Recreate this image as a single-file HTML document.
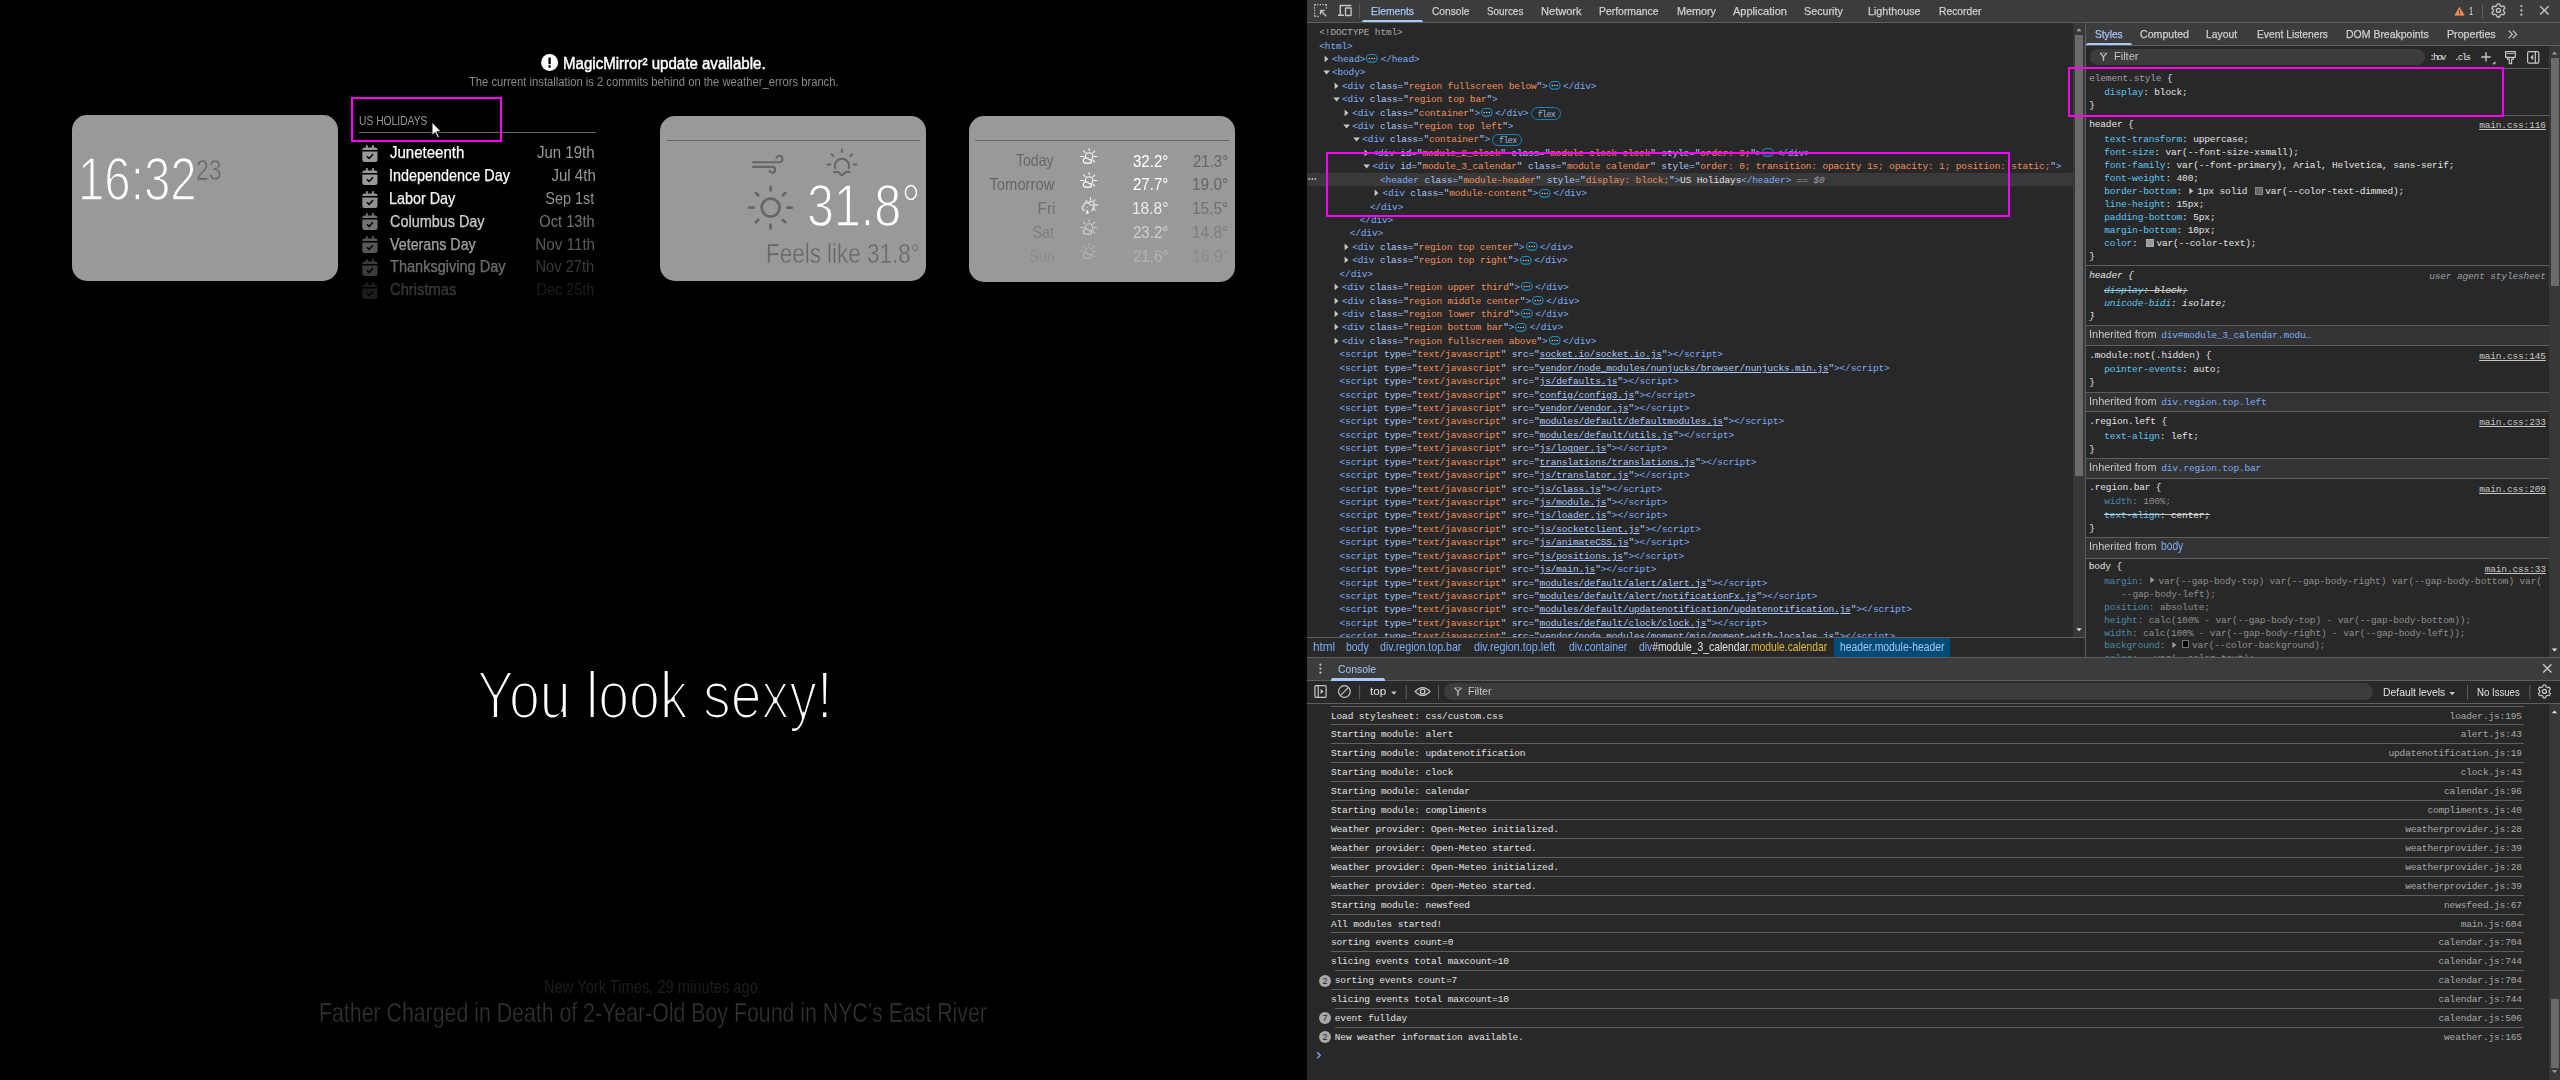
<!DOCTYPE html>
<html><head><meta charset="utf-8"><style>
html,body{margin:0;padding:0;}
body{width:2560px;height:1080px;overflow:hidden;position:relative;background:#000;font-family:"Liberation Sans",sans-serif;}
.t{position:absolute;white-space:pre;line-height:0;}
.r{position:absolute;}
svg{position:absolute;overflow:visible;}
</style></head><body>
<svg style="left:0;top:0" width="0" height="0"><filter id="thin" x="-5%" y="-20%" width="110%" height="140%"><feMorphology operator="erode" radius="1"/></filter></svg>
<svg style="left:541px;top:54px" width="18" height="18" viewBox="0 0 18 18"><circle cx="8.6" cy="8.4" r="8.5" fill="#fff"/><rect x="7.4" y="3.6" width="2.4" height="6.6" rx="0.6" fill="#000"/><rect x="7.4" y="11.3" width="2.4" height="2.4" rx="0.3" fill="#000"/></svg>
<div class="t" id="mm_upd" style="top:63.91px;font-size:15.84px;color:#fff;left:562.50px;transform:scaleX(0.9518);transform-origin:0 0;-webkit-text-stroke:0.45px #fff;">MagicMirror² update available.</div>
<div class="t" id="mm_upd2" style="top:82.17px;font-size:12.50px;color:#8a8a8a;left:469.00px;transform:scaleX(0.8986);transform-origin:0 0;">The current installation is 2 commits behind on the weather_errors branch.</div>
<div class="r" style="left:72.00px;top:115.00px;width:266.00px;height:166.00px;background:#999;border-radius:15px;"></div>
<div class="t" id="mm_clock" style="top:178.84px;font-size:61.05px;color:#fff;left:78.00px;transform:scaleX(0.7764);transform-origin:0 0;-webkit-text-stroke:1.6px #999;">16:32</div>
<div class="t" id="mm_sec" style="top:169.92px;font-size:29.07px;color:#666;left:196.00px;transform:scaleX(0.7924);transform-origin:0 0;-webkit-text-stroke:0.6px #999;">23</div>
<div class="t" id="cal_h" style="top:120.52px;font-size:12.94px;color:#999;left:359.00px;transform:scaleX(0.7951);transform-origin:0 0;">US HOLIDAYS</div>
<div class="r" style="left:359.00px;top:132.00px;width:237.00px;height:1.00px;background:#666;"></div>
<svg style="left:362px;top:144.85px;opacity:1.000" width="16" height="17" viewBox="0 0 16 17"><rect x="0.3" y="2.5" width="15.2" height="14.5" rx="2.2" fill="#999"/><rect x="3.9" y="0" width="1.9" height="4" rx="0.7" fill="#999"/><rect x="10" y="0" width="1.9" height="4" rx="0.7" fill="#999"/><rect x="0" y="5.0" width="16" height="1.5" fill="#000"/><path d="M4.9 11.3 L7.1 13.4 L11 9.3" stroke="#000" stroke-width="1.5" fill="none"/></svg>
<div class="t" id="cal_t0" style="top:153.21px;font-size:16.57px;color:rgba(255,255,255,1.000);left:389.70px;transform:scaleX(0.9072);transform-origin:0 0;-webkit-text-stroke:0.25px rgba(255,255,255,1.000);">Juneteenth</div>
<div class="t" id="cal_d0" style="top:153.21px;font-size:16.57px;color:rgba(153,153,153,1.000);right:1965.50px;transform:scaleX(0.9075);transform-origin:100% 0;">Jun 19th</div>
<svg style="left:362px;top:167.69px;opacity:1.000" width="16" height="17" viewBox="0 0 16 17"><rect x="0.3" y="2.5" width="15.2" height="14.5" rx="2.2" fill="#999"/><rect x="3.9" y="0" width="1.9" height="4" rx="0.7" fill="#999"/><rect x="10" y="0" width="1.9" height="4" rx="0.7" fill="#999"/><rect x="0" y="5.0" width="16" height="1.5" fill="#000"/><path d="M4.9 11.3 L7.1 13.4 L11 9.3" stroke="#000" stroke-width="1.5" fill="none"/></svg>
<div class="t" id="cal_t1" style="top:176.05px;font-size:16.57px;color:rgba(255,255,255,1.000);left:388.70px;transform:scaleX(0.8694);transform-origin:0 0;-webkit-text-stroke:0.25px rgba(255,255,255,1.000);">Independence Day</div>
<div class="t" id="cal_d1" style="top:176.05px;font-size:16.57px;color:rgba(153,153,153,1.000);right:1964.50px;transform:scaleX(0.9095);transform-origin:100% 0;">Jul 4th</div>
<svg style="left:362px;top:190.53px;opacity:0.952" width="16" height="17" viewBox="0 0 16 17"><rect x="0.3" y="2.5" width="15.2" height="14.5" rx="2.2" fill="#999"/><rect x="3.9" y="0" width="1.9" height="4" rx="0.7" fill="#999"/><rect x="10" y="0" width="1.9" height="4" rx="0.7" fill="#999"/><rect x="0" y="5.0" width="16" height="1.5" fill="#000"/><path d="M4.9 11.3 L7.1 13.4 L11 9.3" stroke="#000" stroke-width="1.5" fill="none"/></svg>
<div class="t" id="cal_t2" style="top:198.89px;font-size:16.57px;color:rgba(255,255,255,0.952);left:388.70px;transform:scaleX(0.8673);transform-origin:0 0;-webkit-text-stroke:0.25px rgba(255,255,255,0.952);">Labor Day</div>
<div class="t" id="cal_d2" style="top:198.89px;font-size:16.57px;color:rgba(153,153,153,0.952);right:1965.50px;transform:scaleX(0.8693);transform-origin:100% 0;">Sep 1st</div>
<svg style="left:362px;top:213.37px;opacity:0.762" width="16" height="17" viewBox="0 0 16 17"><rect x="0.3" y="2.5" width="15.2" height="14.5" rx="2.2" fill="#999"/><rect x="3.9" y="0" width="1.9" height="4" rx="0.7" fill="#999"/><rect x="10" y="0" width="1.9" height="4" rx="0.7" fill="#999"/><rect x="0" y="5.0" width="16" height="1.5" fill="#000"/><path d="M4.9 11.3 L7.1 13.4 L11 9.3" stroke="#000" stroke-width="1.5" fill="none"/></svg>
<div class="t" id="cal_t3" style="top:221.73px;font-size:16.57px;color:rgba(255,255,255,0.762);left:389.70px;transform:scaleX(0.8702);transform-origin:0 0;-webkit-text-stroke:0.25px rgba(255,255,255,0.762);">Columbus Day</div>
<div class="t" id="cal_d3" style="top:221.73px;font-size:16.57px;color:rgba(153,153,153,0.762);right:1965.50px;transform:scaleX(0.8825);transform-origin:100% 0;">Oct 13th</div>
<svg style="left:362px;top:236.21px;opacity:0.571" width="16" height="17" viewBox="0 0 16 17"><rect x="0.3" y="2.5" width="15.2" height="14.5" rx="2.2" fill="#999"/><rect x="3.9" y="0" width="1.9" height="4" rx="0.7" fill="#999"/><rect x="10" y="0" width="1.9" height="4" rx="0.7" fill="#999"/><rect x="0" y="5.0" width="16" height="1.5" fill="#000"/><path d="M4.9 11.3 L7.1 13.4 L11 9.3" stroke="#000" stroke-width="1.5" fill="none"/></svg>
<div class="t" id="cal_t4" style="top:244.57px;font-size:16.57px;color:rgba(255,255,255,0.571);left:389.70px;transform:scaleX(0.8625);transform-origin:0 0;-webkit-text-stroke:0.25px rgba(255,255,255,0.571);">Veterans Day</div>
<div class="t" id="cal_d4" style="top:244.57px;font-size:16.57px;color:rgba(153,153,153,0.571);right:1964.50px;transform:scaleX(0.9180);transform-origin:100% 0;">Nov 11th</div>
<svg style="left:362px;top:259.05px;opacity:0.381" width="16" height="17" viewBox="0 0 16 17"><rect x="0.3" y="2.5" width="15.2" height="14.5" rx="2.2" fill="#999"/><rect x="3.9" y="0" width="1.9" height="4" rx="0.7" fill="#999"/><rect x="10" y="0" width="1.9" height="4" rx="0.7" fill="#999"/><rect x="0" y="5.0" width="16" height="1.5" fill="#000"/><path d="M4.9 11.3 L7.1 13.4 L11 9.3" stroke="#000" stroke-width="1.5" fill="none"/></svg>
<div class="t" id="cal_t5" style="top:267.41px;font-size:16.57px;color:rgba(255,255,255,0.381);left:389.70px;transform:scaleX(0.8776);transform-origin:0 0;-webkit-text-stroke:0.25px rgba(255,255,255,0.381);">Thanksgiving Day</div>
<div class="t" id="cal_d5" style="top:267.41px;font-size:16.57px;color:rgba(153,153,153,0.381);right:1965.50px;transform:scaleX(0.8877);transform-origin:100% 0;">Nov 27th</div>
<svg style="left:362px;top:281.89px;opacity:0.190" width="16" height="17" viewBox="0 0 16 17"><rect x="0.3" y="2.5" width="15.2" height="14.5" rx="2.2" fill="#999"/><rect x="3.9" y="0" width="1.9" height="4" rx="0.7" fill="#999"/><rect x="10" y="0" width="1.9" height="4" rx="0.7" fill="#999"/><rect x="0" y="5.0" width="16" height="1.5" fill="#000"/><path d="M4.9 11.3 L7.1 13.4 L11 9.3" stroke="#000" stroke-width="1.5" fill="none"/></svg>
<div class="t" id="cal_t6" style="top:290.25px;font-size:16.57px;color:rgba(255,255,255,0.190);left:389.70px;transform:scaleX(0.8914);transform-origin:0 0;-webkit-text-stroke:0.25px rgba(255,255,255,0.190);">Christmas</div>
<div class="t" id="cal_d6" style="top:290.25px;font-size:16.57px;color:rgba(153,153,153,0.190);right:1965.50px;transform:scaleX(0.8726);transform-origin:100% 0;">Dec 25th</div>
<div class="r" style="left:351.00px;top:97.00px;width:151.00px;height:45.00px;background:transparent;box-sizing:border-box;border:2px solid #f0f;"></div>
<svg style="left:420px;top:110px" width="35" height="35" viewBox="420 110 35 35"><path d="M431.9 121.6 L431.9 136 L435.1 132.9 L437.6 138 L439.5 137.1 L437.1 132 L441.4 131.6 Z" fill="#fff" stroke="#000" stroke-width="1.1" stroke-linejoin="miter"/></svg>
<div class="r" style="left:660.00px;top:116.00px;width:266.00px;height:165.00px;background:#999;border-radius:15px;"></div>
<div class="r" style="left:667.00px;top:140.00px;width:253.00px;height:1.00px;background:#666;"></div>
<svg style="left:745px;top:145px" width="120" height="90" viewBox="745 145 120 90" fill="none" stroke="#666" stroke-linecap="round"><path d="M753.2 162.2 H779.3 A3.2 3.2 0 1 0 776.4 157.7" stroke-width="2.1"/><path d="M753.2 166.9 H772.6 A2.9 2.9 0 1 1 769.6 170.9" stroke-width="2.1"/><path d="M835.2 168.2 A7.1 7.1 0 1 1 848.6 168.2" stroke-width="2.0"/><path d="M841.9 149.6 V152.1 M827.4 164.5 H830.2 M853.6 164.5 H856.4 M831.6 154.2 L833.4 156 M852.2 154.2 L850.4 156" stroke-width="2.0"/><path d="M834.1 172.1 H838.2 L841.9 175.5 L845.6 172.1 H849.8" stroke-width="2.0" stroke-linejoin="round"/><circle cx="770.6" cy="207.6" r="9.0" stroke-width="2.7"/><path d="M770.6 186.8 V190.6 M770.6 224.6 V228.4 M749.2 207.6 H753.9 M787.3 207.6 H792 M755.9 192.9 L758.3 195.3 M785.3 192.9 L782.9 195.3 M755.9 222.3 L758.3 219.9 M785.3 222.3 L782.9 219.9" stroke-width="2.7"/></svg>
<div class="t" id="w_temp" style="top:205.99px;font-size:59.16px;color:#fff;left:806.50px;transform:scaleX(0.8186);transform-origin:0 0;-webkit-text-stroke:1.4px #999;">31.8°</div>
<div class="t" id="w_feels" style="top:254.08px;font-size:27.18px;color:#666;left:765.50px;transform:scaleX(0.8257);transform-origin:0 0;-webkit-text-stroke:0.5px #999;">Feels like 31.8°</div>
<div class="r" style="left:969.00px;top:116.00px;width:266.00px;height:166.00px;background:#999;border-radius:15px;"></div>
<div class="r" style="left:975.00px;top:140.00px;width:254.00px;height:1.00px;background:#666;"></div>
<div class="t" id="fc_d0" style="top:160.91px;font-size:16.72px;color:rgb(102,102,102);right:1506.00px;transform:scaleX(0.8454);transform-origin:100% 0;">Today</div>
<div class="t" id="fc_x0" style="top:161.71px;font-size:16.72px;color:rgb(255,255,255);left:1133.00px;transform:scaleX(0.9001);transform-origin:0 0;">32.2°</div>
<div class="t" id="fc_n0" style="top:161.71px;font-size:16.72px;color:rgb(102,102,102);right:1331.50px;transform:scaleX(0.8974);transform-origin:100% 0;">21.3°</div>
<svg style="left:1080px;top:148.30px" width="18" height="18" viewBox="0 0 18 18" fill="none" stroke="rgb(255,255,255)" stroke-width="1.15" stroke-linecap="round"><circle cx="9.1" cy="8.5" r="3.8"/><path d="M4.9 15.1 A2.85 2.85 0 0 1 6.3 9.7 L10.9 12.3 A1.55 1.55 0 0 1 10.1 15.1 Z" fill="#999"/><path d="M9.1 0.8 V2.4 M14.5 8.5 H16.6 M0.9 8.5 H3.2 M13.1 4.6 L14.6 3.2 M5.1 4.6 L3.6 3.2 M13.1 12.4 L14.6 13.9"/></svg>
<div class="t" id="fc_d1" style="top:185.21px;font-size:16.72px;color:rgb(102,102,102);right:1506.00px;transform:scaleX(0.8843);transform-origin:100% 0;">Tomorrow</div>
<div class="t" id="fc_x1" style="top:185.21px;font-size:16.72px;color:rgb(255,255,255);left:1133.00px;transform:scaleX(0.9001);transform-origin:0 0;">27.7°</div>
<div class="t" id="fc_n1" style="top:185.21px;font-size:16.72px;color:rgb(102,102,102);right:1331.50px;transform:scaleX(0.9238);transform-origin:100% 0;">19.0°</div>
<svg style="left:1080px;top:172.00px" width="18" height="18" viewBox="0 0 18 18" fill="none" stroke="rgb(255,255,255)" stroke-width="1.15" stroke-linecap="round"><circle cx="9.1" cy="8.5" r="3.8"/><path d="M4.9 15.1 A2.85 2.85 0 0 1 6.3 9.7 L10.9 12.3 A1.55 1.55 0 0 1 10.1 15.1 Z" fill="#999"/><path d="M9.1 0.8 V2.4 M14.5 8.5 H16.6 M0.9 8.5 H3.2 M13.1 4.6 L14.6 3.2 M5.1 4.6 L3.6 3.2 M13.1 12.4 L14.6 13.9"/></svg>
<div class="t" id="fc_d2" style="top:208.71px;font-size:16.72px;color:rgb(112,112,112);right:1505.00px;transform:scaleX(0.9191);transform-origin:100% 0;">Fri</div>
<div class="t" id="fc_x2" style="top:208.71px;font-size:16.72px;color:rgb(235,235,235);left:1132.00px;transform:scaleX(0.9274);transform-origin:0 0;">18.8°</div>
<div class="t" id="fc_n2" style="top:208.71px;font-size:16.72px;color:rgb(112,112,112);right:1331.50px;transform:scaleX(0.9238);transform-origin:100% 0;">15.5°</div>
<svg style="left:1080px;top:196.50px" width="18" height="18" viewBox="0 0 18 18" fill="none" stroke="rgb(235,235,235)" stroke-width="1.15" stroke-linecap="round"><path d="M9 5.3 A3 3 0 0 1 14 8.5 A3 3 0 0 1 12.8 11.8"/><path d="M4.2 13.6 A2.5 2.5 0 0 1 3.6 8.8 A3.4 3.4 0 0 1 10.2 7.9 A2.9 2.9 0 0 1 11.6 13.6"/><path d="M10.6 0.6 V2.6 M15.2 7.9 H17.4 M6.2 3.4 L6.8 4.2 M14.9 2.9 L14.2 3.7 M14.4 12.3 L15.2 13.1"/><path d="M7.3 13.1 L8.4 15 A1.25 1.25 0 1 1 6.2 15 Z" fill="rgb(235,235,235)" stroke-width="0.6"/><circle cx="4.6" cy="11.7" r="0.5" fill="rgb(235,235,235)" stroke="none"/><circle cx="7.4" cy="10.3" r="0.5" fill="rgb(235,235,235)" stroke="none"/></svg>
<div class="t" id="fc_d3" style="top:233.21px;font-size:16.72px;color:rgb(126,126,126);right:1506.00px;transform:scaleX(0.8627);transform-origin:100% 0;">Sat</div>
<div class="t" id="fc_x3" style="top:233.21px;font-size:16.72px;color:rgb(207,207,207);left:1133.00px;transform:scaleX(0.9001);transform-origin:0 0;">23.2°</div>
<div class="t" id="fc_n3" style="top:233.21px;font-size:16.72px;color:rgb(126,126,126);right:1331.50px;transform:scaleX(0.9238);transform-origin:100% 0;">14.8°</div>
<svg style="left:1080px;top:219.40px" width="18" height="18" viewBox="0 0 18 18" fill="none" stroke="rgb(207,207,207)" stroke-width="1.15" stroke-linecap="round"><circle cx="9.1" cy="8.5" r="3.8"/><path d="M4.9 15.1 A2.85 2.85 0 0 1 6.3 9.7 L10.9 12.3 A1.55 1.55 0 0 1 10.1 15.1 Z" fill="#999"/><path d="M9.1 0.8 V2.4 M14.5 8.5 H16.6 M0.9 8.5 H3.2 M13.1 4.6 L14.6 3.2 M5.1 4.6 L3.6 3.2 M13.1 12.4 L14.6 13.9"/></svg>
<div class="t" id="fc_d4" style="top:256.71px;font-size:16.72px;color:rgb(139,139,139);right:1505.00px;transform:scaleX(0.8487);transform-origin:100% 0;">Sun</div>
<div class="t" id="fc_x4" style="top:256.71px;font-size:16.72px;color:rgb(180,180,180);left:1133.00px;transform:scaleX(0.9001);transform-origin:0 0;">21.6°</div>
<div class="t" id="fc_n4" style="top:256.71px;font-size:16.72px;color:rgb(139,139,139);right:1330.50px;transform:scaleX(0.9510);transform-origin:100% 0;">16.9°</div>
<svg style="left:1080px;top:243.10px" width="18" height="18" viewBox="0 0 18 18" fill="none" stroke="rgb(180,180,180)" stroke-width="1.15" stroke-linecap="round"><circle cx="9.1" cy="8.5" r="3.8"/><path d="M4.9 15.1 A2.85 2.85 0 0 1 6.3 9.7 L10.9 12.3 A1.55 1.55 0 0 1 10.1 15.1 Z" fill="#999"/><path d="M9.1 0.8 V2.4 M14.5 8.5 H16.6 M0.9 8.5 H3.2 M13.1 4.6 L14.6 3.2 M5.1 4.6 L3.6 3.2 M13.1 12.4 L14.6 13.9"/></svg>
<div class="t" id="compl" style="top:695.37px;font-size:67.59px;color:#fff;left:477.00px;transform:scaleX(0.8203);transform-origin:0 0;filter:url(#thin);">You look sexy!</div>
<div class="t" id="news_src" style="top:987.00px;font-size:18.17px;color:#1e1e1e;left:544.00px;transform:scaleX(0.8087);transform-origin:0 0;">New York Times, 29 minutes ago:</div>
<div class="t" id="news_h" style="top:1013.33px;font-size:27.03px;color:#333333;left:319.00px;transform:scaleX(0.7887);transform-origin:0 0;-webkit-text-stroke:0.4px #000;">Father Charged in Death of 2-Year-Old Boy Found in NYC’s East River</div>
<div class="r" style="left:1307.00px;top:0.00px;width:1253.00px;height:1080.00px;background:#282828;"></div>
<div class="r" style="left:1307.00px;top:0.00px;width:1253.00px;height:22.00px;background:#3c3c3c;"></div>
<div class="r" style="left:1307.00px;top:22.00px;width:1253.00px;height:1.00px;background:#5e5e5e;"></div>
<svg style="left:1307px;top:0px" width="60" height="22" viewBox="1307 0 60 22" fill="none" stroke="#c7c7c7" stroke-width="1.2"><path d="M1314.6 4.6 H1326.4 M1314.6 4.6 V16.4" stroke-dasharray="1.3 1.3"/><path d="M1326.4 4.6 V9 M1314.6 16.4 H1319" stroke-dasharray="1.3 1.3"/><path d="M1320.5 10.5 L1326.3 16.3 M1320.5 10.5 H1324.6 M1320.5 10.5 V14.6" stroke-width="1.3"/><path d="M1340.3 15.3 V5.6 H1351.3 M1337.9 15.3 H1344" stroke-width="1.5"/><rect x="1345.5" y="8" width="5.6" height="7.5" rx="0.6" stroke-width="1.3"/><path d="M1359.6 4 V18.5" stroke="#5e5e5e" stroke-width="1"/></svg>
<div class="t" id="tab0" style="top:10.77px;font-size:11.63px;color:#a8c7fa;left:1370.50px;transform:scaleX(0.8880);transform-origin:0 0;-webkit-text-stroke:0.25px #a8c7fa;">Elements</div>
<div class="t" id="tab1" style="top:10.77px;font-size:11.63px;color:#d0d0d0;left:1432.00px;transform:scaleX(0.8752);transform-origin:0 0;-webkit-text-stroke:0.25px #d0d0d0;">Console</div>
<div class="t" id="tab2" style="top:10.77px;font-size:11.63px;color:#d0d0d0;left:1486.50px;transform:scaleX(0.8520);transform-origin:0 0;-webkit-text-stroke:0.25px #d0d0d0;">Sources</div>
<div class="t" id="tab3" style="top:10.77px;font-size:11.63px;color:#d0d0d0;left:1540.90px;transform:scaleX(0.9507);transform-origin:0 0;-webkit-text-stroke:0.25px #d0d0d0;">Network</div>
<div class="t" id="tab4" style="top:10.77px;font-size:11.63px;color:#d0d0d0;left:1599.00px;transform:scaleX(0.8955);transform-origin:0 0;-webkit-text-stroke:0.25px #d0d0d0;">Performance</div>
<div class="t" id="tab5" style="top:10.77px;font-size:11.63px;color:#d0d0d0;left:1676.50px;transform:scaleX(0.9292);transform-origin:0 0;-webkit-text-stroke:0.25px #d0d0d0;">Memory</div>
<div class="t" id="tab6" style="top:10.77px;font-size:11.63px;color:#d0d0d0;left:1733.00px;transform:scaleX(0.9477);transform-origin:0 0;-webkit-text-stroke:0.25px #d0d0d0;">Application</div>
<div class="t" id="tab7" style="top:10.77px;font-size:11.63px;color:#d0d0d0;left:1803.75px;transform:scaleX(0.9249);transform-origin:0 0;-webkit-text-stroke:0.25px #d0d0d0;">Security</div>
<div class="t" id="tab8" style="top:10.77px;font-size:11.63px;color:#d0d0d0;left:1868.00px;transform:scaleX(0.9227);transform-origin:0 0;-webkit-text-stroke:0.25px #d0d0d0;">Lighthouse</div>
<div class="t" id="tab9" style="top:10.77px;font-size:11.63px;color:#d0d0d0;left:1938.60px;transform:scaleX(0.8857);transform-origin:0 0;-webkit-text-stroke:0.25px #d0d0d0;">Recorder</div>
<div class="r" style="left:1362.00px;top:20.00px;width:61.00px;height:2.00px;background:#a8c7fa;border-radius:2px 2px 0 0;"></div>
<svg style="left:2440px;top:0px" width="120" height="22" viewBox="2440 0 120 22"><path d="M2459.5 7.3 L2464.1 15.2 H2454.9 Z" fill="#f28b54" stroke="#f28b54" stroke-width="0.7" stroke-linejoin="round"/><rect x="2459" y="9.8" width="1.1" height="2.9" fill="#3c3c3c"/><rect x="2459" y="13.3" width="1.1" height="1.1" fill="#3c3c3c"/><path d="M2482.5 4 V18.5" stroke="#5e5e5e" stroke-width="1"/><g fill="none" stroke="#c7c7c7" stroke-width="1.3"><circle cx="2498.4" cy="10.4" r="2"/><path d="M2497.2 3.8 H2499.6 L2500.1 5.6 L2501.9 6.6 L2503.7 6 L2504.9 8.1 L2503.6 9.4 V11.4 L2504.9 12.7 L2503.7 14.8 L2501.9 14.2 L2500.1 15.2 L2499.6 17 H2497.2 L2496.7 15.2 L2494.9 14.2 L2493.1 14.8 L2491.9 12.7 L2493.2 11.4 V9.4 L2491.9 8.1 L2493.1 6 L2494.9 6.6 L2496.7 5.6 Z" stroke-linejoin="round"/><path d="M2540.2 6.2 L2548.6 14.6 M2548.6 6.2 L2540.2 14.6" stroke-width="1.4"/></g><circle cx="2521.4" cy="6" r="1.1" fill="#c7c7c7"/><circle cx="2521.4" cy="10.4" r="1.1" fill="#c7c7c7"/><circle cx="2521.4" cy="14.7" r="1.1" fill="#c7c7c7"/></svg>
<div class="t" id="warn1" style="top:10.77px;font-size:11.63px;color:#e3e3e3;left:2468.80px;transform:scaleX(0.6333);transform-origin:0 0;">1</div>
<div class="r" style="left:2073.00px;top:23.00px;width:12.00px;height:614.00px;background:#383838;"></div>
<div class="r" style="left:2085.00px;top:23.00px;width:1.00px;height:634.00px;background:#5e5e5e;"></div>
<div class="r" style="left:1307.00px;top:637.00px;width:778.00px;height:1.00px;background:#5e5e5e;"></div>
<div class="r" style="left:1307.00px;top:657.00px;width:1253.00px;height:1.00px;background:#5e5e5e;"></div>
<div class="r" style="left:1307.00px;top:173.38px;width:766.00px;height:12.50px;background:#393939;"></div>
<svg style="left:1308px;top:177.08px" width="10" height="4" viewBox="0 0 10 4"><circle cx="1.3" cy="2" r="0.9" fill="#c7c7c7"/><circle cx="4.3" cy="2" r="0.9" fill="#c7c7c7"/><circle cx="7.3" cy="2" r="0.9" fill="#c7c7c7"/></svg>
<div class="t" style="left:1319.30px;top:33.07px;font-family:'Liberation Mono',monospace;font-size:9.50px;letter-spacing:-0.146px;"><span style="color:#a8a8a8;">&lt;!DOCTYPE html&gt;</span></div>
<div class="t" style="left:1319.30px;top:46.50px;font-family:'Liberation Mono',monospace;font-size:9.50px;letter-spacing:-0.146px;"><span style="color:#7cacf8;">&lt;html&gt;</span></div>
<svg style="left:1322.62px;top:54.85px" width="8" height="8" viewBox="0 0 8 8"><path d="M1.6 0.6 V7.2 L5.4 3.9 Z" fill="#c7c7c7"/></svg>
<div class="t" style="left:1331.92px;top:59.92px;font-family:'Liberation Mono',monospace;font-size:9.50px;letter-spacing:-0.146px;"><span style="color:#7cacf8;">&lt;head&gt;</span></div>
<svg style="left:1366.45px;top:54.25px" width="12" height="9" viewBox="0 0 12 9"><rect x="0.5" y="0.5" width="10.6" height="7.6" rx="3.8" fill="none" stroke="#1d8ec7" stroke-width="1.1"/><circle cx="3.3" cy="4.4" r="0.75" fill="#d0d0d0"/><circle cx="5.8" cy="4.4" r="0.75" fill="#d0d0d0"/><circle cx="8.3" cy="4.4" r="0.75" fill="#d0d0d0"/></svg>
<div class="t" style="left:1380.65px;top:59.92px;font-family:'Liberation Mono',monospace;font-size:9.50px;letter-spacing:-0.146px;"><span style="color:#7cacf8;">&lt;/head&gt;</span></div>
<svg style="left:1322.62px;top:68.88px" width="8" height="8" viewBox="0 0 8 8"><path d="M0.3 1.6 H6.9 L3.6 5.6 Z" fill="#c7c7c7"/></svg>
<div class="t" style="left:1331.92px;top:73.35px;font-family:'Liberation Mono',monospace;font-size:9.50px;letter-spacing:-0.146px;"><span style="color:#7cacf8;">&lt;body&gt;</span></div>
<svg style="left:1332.74px;top:81.70px" width="8" height="8" viewBox="0 0 8 8"><path d="M1.6 0.6 V7.2 L5.4 3.9 Z" fill="#c7c7c7"/></svg>
<div class="t" style="left:1342.04px;top:86.77px;font-family:'Liberation Mono',monospace;font-size:9.50px;letter-spacing:-0.146px;"><span style="color:#7cacf8;">&lt;div</span><span style="color:#a8c7fa;"> class</span><span style="color:#a8c7fa;">=&quot;</span><span style="color:#ee8f5c;">region fullscreen below</span><span style="color:#a8c7fa;">&quot;</span><span style="color:#7cacf8;">&gt;</span></div>
<svg style="left:1548.78px;top:81.10px" width="12" height="9" viewBox="0 0 12 9"><rect x="0.5" y="0.5" width="10.6" height="7.6" rx="3.8" fill="none" stroke="#1d8ec7" stroke-width="1.1"/><circle cx="3.3" cy="4.4" r="0.75" fill="#d0d0d0"/><circle cx="5.8" cy="4.4" r="0.75" fill="#d0d0d0"/><circle cx="8.3" cy="4.4" r="0.75" fill="#d0d0d0"/></svg>
<div class="t" style="left:1562.98px;top:86.77px;font-family:'Liberation Mono',monospace;font-size:9.50px;letter-spacing:-0.146px;"><span style="color:#7cacf8;">&lt;/div&gt;</span></div>
<svg style="left:1332.74px;top:95.72px" width="8" height="8" viewBox="0 0 8 8"><path d="M0.3 1.6 H6.9 L3.6 5.6 Z" fill="#c7c7c7"/></svg>
<div class="t" style="left:1342.04px;top:100.20px;font-family:'Liberation Mono',monospace;font-size:9.50px;letter-spacing:-0.146px;"><span style="color:#7cacf8;">&lt;div</span><span style="color:#a8c7fa;"> class</span><span style="color:#a8c7fa;">=&quot;</span><span style="color:#ee8f5c;">region top bar</span><span style="color:#a8c7fa;">&quot;</span><span style="color:#7cacf8;">&gt;</span></div>
<svg style="left:1342.86px;top:108.55px" width="8" height="8" viewBox="0 0 8 8"><path d="M1.6 0.6 V7.2 L5.4 3.9 Z" fill="#c7c7c7"/></svg>
<div class="t" style="left:1352.16px;top:113.62px;font-family:'Liberation Mono',monospace;font-size:9.50px;letter-spacing:-0.146px;"><span style="color:#7cacf8;">&lt;div</span><span style="color:#a8c7fa;"> class</span><span style="color:#a8c7fa;">=&quot;</span><span style="color:#ee8f5c;">container</span><span style="color:#a8c7fa;">&quot;</span><span style="color:#7cacf8;">&gt;</span></div>
<svg style="left:1481.12px;top:107.95px" width="12" height="9" viewBox="0 0 12 9"><rect x="0.5" y="0.5" width="10.6" height="7.6" rx="3.8" fill="none" stroke="#1d8ec7" stroke-width="1.1"/><circle cx="3.3" cy="4.4" r="0.75" fill="#d0d0d0"/><circle cx="5.8" cy="4.4" r="0.75" fill="#d0d0d0"/><circle cx="8.3" cy="4.4" r="0.75" fill="#d0d0d0"/></svg>
<div class="t" style="left:1495.32px;top:113.62px;font-family:'Liberation Mono',monospace;font-size:9.50px;letter-spacing:-0.146px;"><span style="color:#7cacf8;">&lt;/div&gt;</span></div>
<div class="r" style="left:1530.75px;top:107.15px;width:27.8px;height:10.4px;border:1.1px solid #0b86c6;border-radius:6.5px;"></div>
<div class="t" style="left:1537.65px;top:114.51px;font-family:'Liberation Mono',monospace;font-size:8.40px;letter-spacing:-0.620px;"><span style="color:#9db6de;">flex</span></div>
<svg style="left:1342.86px;top:122.58px" width="8" height="8" viewBox="0 0 8 8"><path d="M0.3 1.6 H6.9 L3.6 5.6 Z" fill="#c7c7c7"/></svg>
<div class="t" style="left:1352.16px;top:127.05px;font-family:'Liberation Mono',monospace;font-size:9.50px;letter-spacing:-0.146px;"><span style="color:#7cacf8;">&lt;div</span><span style="color:#a8c7fa;"> class</span><span style="color:#a8c7fa;">=&quot;</span><span style="color:#ee8f5c;">region top left</span><span style="color:#a8c7fa;">&quot;</span><span style="color:#7cacf8;">&gt;</span></div>
<svg style="left:1352.98px;top:136.00px" width="8" height="8" viewBox="0 0 8 8"><path d="M0.3 1.6 H6.9 L3.6 5.6 Z" fill="#c7c7c7"/></svg>
<div class="t" style="left:1362.28px;top:140.47px;font-family:'Liberation Mono',monospace;font-size:9.50px;letter-spacing:-0.146px;"><span style="color:#7cacf8;">&lt;div</span><span style="color:#a8c7fa;"> class</span><span style="color:#a8c7fa;">=&quot;</span><span style="color:#ee8f5c;">container</span><span style="color:#a8c7fa;">&quot;</span><span style="color:#7cacf8;">&gt;</span></div>
<div class="r" style="left:1492.14px;top:134.00px;width:27.8px;height:10.4px;border:1.1px solid #0b86c6;border-radius:6.5px;"></div>
<div class="t" style="left:1499.05px;top:141.36px;font-family:'Liberation Mono',monospace;font-size:8.40px;letter-spacing:-0.620px;"><span style="color:#9db6de;">flex</span></div>
<svg style="left:1363.10px;top:148.83px" width="8" height="8" viewBox="0 0 8 8"><path d="M1.6 0.6 V7.2 L5.4 3.9 Z" fill="#c7c7c7"/></svg>
<div class="t" style="left:1372.40px;top:153.90px;font-family:'Liberation Mono',monospace;font-size:9.50px;letter-spacing:-0.146px;"><span style="color:#7cacf8;">&lt;div</span><span style="color:#a8c7fa;"> id</span><span style="color:#a8c7fa;">=&quot;</span><span style="color:#ee8f5c;">module_2_clock</span><span style="color:#a8c7fa;">&quot;</span><span style="color:#a8c7fa;"> class</span><span style="color:#a8c7fa;">=&quot;</span><span style="color:#ee8f5c;">module clock clock</span><span style="color:#a8c7fa;">&quot;</span><span style="color:#a8c7fa;"> style</span><span style="color:#a8c7fa;">=&quot;</span><span style="color:#ee8f5c;">order: 0;</span><span style="color:#a8c7fa;">&quot;</span><span style="color:#7cacf8;">&gt;</span></div>
<svg style="left:1762.45px;top:148.23px" width="12" height="9" viewBox="0 0 12 9"><rect x="0.5" y="0.5" width="10.6" height="7.6" rx="3.8" fill="none" stroke="#1d8ec7" stroke-width="1.1"/><circle cx="3.3" cy="4.4" r="0.75" fill="#d0d0d0"/><circle cx="5.8" cy="4.4" r="0.75" fill="#d0d0d0"/><circle cx="8.3" cy="4.4" r="0.75" fill="#d0d0d0"/></svg>
<div class="t" style="left:1776.65px;top:153.90px;font-family:'Liberation Mono',monospace;font-size:9.50px;letter-spacing:-0.146px;"><span style="color:#7cacf8;">&lt;/div&gt;</span></div>
<svg style="left:1363.10px;top:162.85px" width="8" height="8" viewBox="0 0 8 8"><path d="M0.3 1.6 H6.9 L3.6 5.6 Z" fill="#c7c7c7"/></svg>
<div class="t" style="left:1372.40px;top:167.32px;font-family:'Liberation Mono',monospace;font-size:9.50px;letter-spacing:-0.146px;"><span style="color:#7cacf8;">&lt;div</span><span style="color:#a8c7fa;"> id</span><span style="color:#a8c7fa;">=&quot;</span><span style="color:#ee8f5c;">module_3_calendar</span><span style="color:#a8c7fa;">&quot;</span><span style="color:#a8c7fa;"> class</span><span style="color:#a8c7fa;">=&quot;</span><span style="color:#ee8f5c;">module calendar</span><span style="color:#a8c7fa;">&quot;</span><span style="color:#a8c7fa;"> style</span><span style="color:#a8c7fa;">=&quot;</span><span style="color:#ee8f5c;">order: 0; transition: opacity 1s; opacity: 1; position: static;</span><span style="color:#a8c7fa;">&quot;</span><span style="color:#7cacf8;">&gt;</span></div>
<div class="t" style="left:1380.02px;top:180.75px;font-family:'Liberation Mono',monospace;font-size:9.50px;letter-spacing:-0.146px;"><span style="color:#7cacf8;">&lt;header</span><span style="color:#a8c7fa;"> class</span><span style="color:#a8c7fa;">=&quot;</span><span style="color:#ee8f5c;">module-header</span><span style="color:#a8c7fa;">&quot;</span><span style="color:#a8c7fa;"> style</span><span style="color:#a8c7fa;">=&quot;</span><span style="color:#ee8f5c;">display: block;</span><span style="color:#a8c7fa;">&quot;</span><span style="color:#7cacf8;">&gt;</span><span style="color:#e3e3e3;">US Holidays</span><span style="color:#7cacf8;">&lt;/header&gt;</span><span style="color:#9e9e9e;"> == </span><span style="color:#9e9e9e;font-style:italic;">$0</span></div>
<svg style="left:1373.22px;top:189.10px" width="8" height="8" viewBox="0 0 8 8"><path d="M1.6 0.6 V7.2 L5.4 3.9 Z" fill="#c7c7c7"/></svg>
<div class="t" style="left:1382.52px;top:194.17px;font-family:'Liberation Mono',monospace;font-size:9.50px;letter-spacing:-0.146px;"><span style="color:#7cacf8;">&lt;div</span><span style="color:#a8c7fa;"> class</span><span style="color:#a8c7fa;">=&quot;</span><span style="color:#ee8f5c;">module-content</span><span style="color:#a8c7fa;">&quot;</span><span style="color:#7cacf8;">&gt;</span></div>
<svg style="left:1539.26px;top:188.50px" width="12" height="9" viewBox="0 0 12 9"><rect x="0.5" y="0.5" width="10.6" height="7.6" rx="3.8" fill="none" stroke="#1d8ec7" stroke-width="1.1"/><circle cx="3.3" cy="4.4" r="0.75" fill="#d0d0d0"/><circle cx="5.8" cy="4.4" r="0.75" fill="#d0d0d0"/><circle cx="8.3" cy="4.4" r="0.75" fill="#d0d0d0"/></svg>
<div class="t" style="left:1553.46px;top:194.17px;font-family:'Liberation Mono',monospace;font-size:9.50px;letter-spacing:-0.146px;"><span style="color:#7cacf8;">&lt;/div&gt;</span></div>
<div class="t" style="left:1369.90px;top:207.60px;font-family:'Liberation Mono',monospace;font-size:9.50px;letter-spacing:-0.146px;"><span style="color:#7cacf8;">&lt;/div&gt;</span></div>
<div class="t" style="left:1359.78px;top:221.02px;font-family:'Liberation Mono',monospace;font-size:9.50px;letter-spacing:-0.146px;"><span style="color:#7cacf8;">&lt;/div&gt;</span></div>
<div class="t" style="left:1349.66px;top:234.45px;font-family:'Liberation Mono',monospace;font-size:9.50px;letter-spacing:-0.146px;"><span style="color:#7cacf8;">&lt;/div&gt;</span></div>
<svg style="left:1342.86px;top:242.80px" width="8" height="8" viewBox="0 0 8 8"><path d="M1.6 0.6 V7.2 L5.4 3.9 Z" fill="#c7c7c7"/></svg>
<div class="t" style="left:1352.16px;top:247.87px;font-family:'Liberation Mono',monospace;font-size:9.50px;letter-spacing:-0.146px;"><span style="color:#7cacf8;">&lt;div</span><span style="color:#a8c7fa;"> class</span><span style="color:#a8c7fa;">=&quot;</span><span style="color:#ee8f5c;">region top center</span><span style="color:#a8c7fa;">&quot;</span><span style="color:#7cacf8;">&gt;</span></div>
<svg style="left:1525.56px;top:242.20px" width="12" height="9" viewBox="0 0 12 9"><rect x="0.5" y="0.5" width="10.6" height="7.6" rx="3.8" fill="none" stroke="#1d8ec7" stroke-width="1.1"/><circle cx="3.3" cy="4.4" r="0.75" fill="#d0d0d0"/><circle cx="5.8" cy="4.4" r="0.75" fill="#d0d0d0"/><circle cx="8.3" cy="4.4" r="0.75" fill="#d0d0d0"/></svg>
<div class="t" style="left:1539.76px;top:247.87px;font-family:'Liberation Mono',monospace;font-size:9.50px;letter-spacing:-0.146px;"><span style="color:#7cacf8;">&lt;/div&gt;</span></div>
<svg style="left:1342.86px;top:256.23px" width="8" height="8" viewBox="0 0 8 8"><path d="M1.6 0.6 V7.2 L5.4 3.9 Z" fill="#c7c7c7"/></svg>
<div class="t" style="left:1352.16px;top:261.30px;font-family:'Liberation Mono',monospace;font-size:9.50px;letter-spacing:-0.146px;"><span style="color:#7cacf8;">&lt;div</span><span style="color:#a8c7fa;"> class</span><span style="color:#a8c7fa;">=&quot;</span><span style="color:#ee8f5c;">region top right</span><span style="color:#a8c7fa;">&quot;</span><span style="color:#7cacf8;">&gt;</span></div>
<svg style="left:1520.01px;top:255.63px" width="12" height="9" viewBox="0 0 12 9"><rect x="0.5" y="0.5" width="10.6" height="7.6" rx="3.8" fill="none" stroke="#1d8ec7" stroke-width="1.1"/><circle cx="3.3" cy="4.4" r="0.75" fill="#d0d0d0"/><circle cx="5.8" cy="4.4" r="0.75" fill="#d0d0d0"/><circle cx="8.3" cy="4.4" r="0.75" fill="#d0d0d0"/></svg>
<div class="t" style="left:1534.21px;top:261.30px;font-family:'Liberation Mono',monospace;font-size:9.50px;letter-spacing:-0.146px;"><span style="color:#7cacf8;">&lt;/div&gt;</span></div>
<div class="t" style="left:1339.54px;top:274.72px;font-family:'Liberation Mono',monospace;font-size:9.50px;letter-spacing:-0.146px;"><span style="color:#7cacf8;">&lt;/div&gt;</span></div>
<svg style="left:1332.74px;top:283.07px" width="8" height="8" viewBox="0 0 8 8"><path d="M1.6 0.6 V7.2 L5.4 3.9 Z" fill="#c7c7c7"/></svg>
<div class="t" style="left:1342.04px;top:288.15px;font-family:'Liberation Mono',monospace;font-size:9.50px;letter-spacing:-0.146px;"><span style="color:#7cacf8;">&lt;div</span><span style="color:#a8c7fa;"> class</span><span style="color:#a8c7fa;">=&quot;</span><span style="color:#ee8f5c;">region upper third</span><span style="color:#a8c7fa;">&quot;</span><span style="color:#7cacf8;">&gt;</span></div>
<svg style="left:1521.00px;top:282.48px" width="12" height="9" viewBox="0 0 12 9"><rect x="0.5" y="0.5" width="10.6" height="7.6" rx="3.8" fill="none" stroke="#1d8ec7" stroke-width="1.1"/><circle cx="3.3" cy="4.4" r="0.75" fill="#d0d0d0"/><circle cx="5.8" cy="4.4" r="0.75" fill="#d0d0d0"/><circle cx="8.3" cy="4.4" r="0.75" fill="#d0d0d0"/></svg>
<div class="t" style="left:1535.20px;top:288.15px;font-family:'Liberation Mono',monospace;font-size:9.50px;letter-spacing:-0.146px;"><span style="color:#7cacf8;">&lt;/div&gt;</span></div>
<svg style="left:1332.74px;top:296.50px" width="8" height="8" viewBox="0 0 8 8"><path d="M1.6 0.6 V7.2 L5.4 3.9 Z" fill="#c7c7c7"/></svg>
<div class="t" style="left:1342.04px;top:301.57px;font-family:'Liberation Mono',monospace;font-size:9.50px;letter-spacing:-0.146px;"><span style="color:#7cacf8;">&lt;div</span><span style="color:#a8c7fa;"> class</span><span style="color:#a8c7fa;">=&quot;</span><span style="color:#ee8f5c;">region middle center</span><span style="color:#a8c7fa;">&quot;</span><span style="color:#7cacf8;">&gt;</span></div>
<svg style="left:1532.11px;top:295.90px" width="12" height="9" viewBox="0 0 12 9"><rect x="0.5" y="0.5" width="10.6" height="7.6" rx="3.8" fill="none" stroke="#1d8ec7" stroke-width="1.1"/><circle cx="3.3" cy="4.4" r="0.75" fill="#d0d0d0"/><circle cx="5.8" cy="4.4" r="0.75" fill="#d0d0d0"/><circle cx="8.3" cy="4.4" r="0.75" fill="#d0d0d0"/></svg>
<div class="t" style="left:1546.31px;top:301.57px;font-family:'Liberation Mono',monospace;font-size:9.50px;letter-spacing:-0.146px;"><span style="color:#7cacf8;">&lt;/div&gt;</span></div>
<svg style="left:1332.74px;top:309.93px" width="8" height="8" viewBox="0 0 8 8"><path d="M1.6 0.6 V7.2 L5.4 3.9 Z" fill="#c7c7c7"/></svg>
<div class="t" style="left:1342.04px;top:315.00px;font-family:'Liberation Mono',monospace;font-size:9.50px;letter-spacing:-0.146px;"><span style="color:#7cacf8;">&lt;div</span><span style="color:#a8c7fa;"> class</span><span style="color:#a8c7fa;">=&quot;</span><span style="color:#ee8f5c;">region lower third</span><span style="color:#a8c7fa;">&quot;</span><span style="color:#7cacf8;">&gt;</span></div>
<svg style="left:1521.00px;top:309.33px" width="12" height="9" viewBox="0 0 12 9"><rect x="0.5" y="0.5" width="10.6" height="7.6" rx="3.8" fill="none" stroke="#1d8ec7" stroke-width="1.1"/><circle cx="3.3" cy="4.4" r="0.75" fill="#d0d0d0"/><circle cx="5.8" cy="4.4" r="0.75" fill="#d0d0d0"/><circle cx="8.3" cy="4.4" r="0.75" fill="#d0d0d0"/></svg>
<div class="t" style="left:1535.20px;top:315.00px;font-family:'Liberation Mono',monospace;font-size:9.50px;letter-spacing:-0.146px;"><span style="color:#7cacf8;">&lt;/div&gt;</span></div>
<svg style="left:1332.74px;top:323.35px" width="8" height="8" viewBox="0 0 8 8"><path d="M1.6 0.6 V7.2 L5.4 3.9 Z" fill="#c7c7c7"/></svg>
<div class="t" style="left:1342.04px;top:328.42px;font-family:'Liberation Mono',monospace;font-size:9.50px;letter-spacing:-0.146px;"><span style="color:#7cacf8;">&lt;div</span><span style="color:#a8c7fa;"> class</span><span style="color:#a8c7fa;">=&quot;</span><span style="color:#ee8f5c;">region bottom bar</span><span style="color:#a8c7fa;">&quot;</span><span style="color:#7cacf8;">&gt;</span></div>
<svg style="left:1515.44px;top:322.75px" width="12" height="9" viewBox="0 0 12 9"><rect x="0.5" y="0.5" width="10.6" height="7.6" rx="3.8" fill="none" stroke="#1d8ec7" stroke-width="1.1"/><circle cx="3.3" cy="4.4" r="0.75" fill="#d0d0d0"/><circle cx="5.8" cy="4.4" r="0.75" fill="#d0d0d0"/><circle cx="8.3" cy="4.4" r="0.75" fill="#d0d0d0"/></svg>
<div class="t" style="left:1529.64px;top:328.42px;font-family:'Liberation Mono',monospace;font-size:9.50px;letter-spacing:-0.146px;"><span style="color:#7cacf8;">&lt;/div&gt;</span></div>
<svg style="left:1332.74px;top:336.78px" width="8" height="8" viewBox="0 0 8 8"><path d="M1.6 0.6 V7.2 L5.4 3.9 Z" fill="#c7c7c7"/></svg>
<div class="t" style="left:1342.04px;top:341.85px;font-family:'Liberation Mono',monospace;font-size:9.50px;letter-spacing:-0.146px;"><span style="color:#7cacf8;">&lt;div</span><span style="color:#a8c7fa;"> class</span><span style="color:#a8c7fa;">=&quot;</span><span style="color:#ee8f5c;">region fullscreen above</span><span style="color:#a8c7fa;">&quot;</span><span style="color:#7cacf8;">&gt;</span></div>
<svg style="left:1548.78px;top:336.18px" width="12" height="9" viewBox="0 0 12 9"><rect x="0.5" y="0.5" width="10.6" height="7.6" rx="3.8" fill="none" stroke="#1d8ec7" stroke-width="1.1"/><circle cx="3.3" cy="4.4" r="0.75" fill="#d0d0d0"/><circle cx="5.8" cy="4.4" r="0.75" fill="#d0d0d0"/><circle cx="8.3" cy="4.4" r="0.75" fill="#d0d0d0"/></svg>
<div class="t" style="left:1562.98px;top:341.85px;font-family:'Liberation Mono',monospace;font-size:9.50px;letter-spacing:-0.146px;"><span style="color:#7cacf8;">&lt;/div&gt;</span></div>
<div class="t" style="left:1339.54px;top:355.27px;font-family:'Liberation Mono',monospace;font-size:9.50px;letter-spacing:-0.146px;"><span style="color:#7cacf8;">&lt;script</span><span style="color:#a8c7fa;"> type</span><span style="color:#a8c7fa;">=&quot;</span><span style="color:#ee8f5c;">text/javascript</span><span style="color:#a8c7fa;">&quot;</span><span style="color:#a8c7fa;"> src</span><span style="color:#a8c7fa;">=&quot;</span><span style="color:#a8c7fa;text-decoration:underline;">socket.io/socket.io.js</span><span style="color:#a8c7fa;">&quot;</span><span style="color:#7cacf8;">&gt;</span><span style="color:#7cacf8;">&lt;/script&gt;</span></div>
<div class="t" style="left:1339.54px;top:368.70px;font-family:'Liberation Mono',monospace;font-size:9.50px;letter-spacing:-0.146px;"><span style="color:#7cacf8;">&lt;script</span><span style="color:#a8c7fa;"> type</span><span style="color:#a8c7fa;">=&quot;</span><span style="color:#ee8f5c;">text/javascript</span><span style="color:#a8c7fa;">&quot;</span><span style="color:#a8c7fa;"> src</span><span style="color:#a8c7fa;">=&quot;</span><span style="color:#a8c7fa;text-decoration:underline;">vendor/node_modules/nunjucks/browser/nunjucks.min.js</span><span style="color:#a8c7fa;">&quot;</span><span style="color:#7cacf8;">&gt;</span><span style="color:#7cacf8;">&lt;/script&gt;</span></div>
<div class="t" style="left:1339.54px;top:382.12px;font-family:'Liberation Mono',monospace;font-size:9.50px;letter-spacing:-0.146px;"><span style="color:#7cacf8;">&lt;script</span><span style="color:#a8c7fa;"> type</span><span style="color:#a8c7fa;">=&quot;</span><span style="color:#ee8f5c;">text/javascript</span><span style="color:#a8c7fa;">&quot;</span><span style="color:#a8c7fa;"> src</span><span style="color:#a8c7fa;">=&quot;</span><span style="color:#a8c7fa;text-decoration:underline;">js/defaults.js</span><span style="color:#a8c7fa;">&quot;</span><span style="color:#7cacf8;">&gt;</span><span style="color:#7cacf8;">&lt;/script&gt;</span></div>
<div class="t" style="left:1339.54px;top:395.55px;font-family:'Liberation Mono',monospace;font-size:9.50px;letter-spacing:-0.146px;"><span style="color:#7cacf8;">&lt;script</span><span style="color:#a8c7fa;"> type</span><span style="color:#a8c7fa;">=&quot;</span><span style="color:#ee8f5c;">text/javascript</span><span style="color:#a8c7fa;">&quot;</span><span style="color:#a8c7fa;"> src</span><span style="color:#a8c7fa;">=&quot;</span><span style="color:#a8c7fa;text-decoration:underline;">config/config3.js</span><span style="color:#a8c7fa;">&quot;</span><span style="color:#7cacf8;">&gt;</span><span style="color:#7cacf8;">&lt;/script&gt;</span></div>
<div class="t" style="left:1339.54px;top:408.97px;font-family:'Liberation Mono',monospace;font-size:9.50px;letter-spacing:-0.146px;"><span style="color:#7cacf8;">&lt;script</span><span style="color:#a8c7fa;"> type</span><span style="color:#a8c7fa;">=&quot;</span><span style="color:#ee8f5c;">text/javascript</span><span style="color:#a8c7fa;">&quot;</span><span style="color:#a8c7fa;"> src</span><span style="color:#a8c7fa;">=&quot;</span><span style="color:#a8c7fa;text-decoration:underline;">vendor/vendor.js</span><span style="color:#a8c7fa;">&quot;</span><span style="color:#7cacf8;">&gt;</span><span style="color:#7cacf8;">&lt;/script&gt;</span></div>
<div class="t" style="left:1339.54px;top:422.40px;font-family:'Liberation Mono',monospace;font-size:9.50px;letter-spacing:-0.146px;"><span style="color:#7cacf8;">&lt;script</span><span style="color:#a8c7fa;"> type</span><span style="color:#a8c7fa;">=&quot;</span><span style="color:#ee8f5c;">text/javascript</span><span style="color:#a8c7fa;">&quot;</span><span style="color:#a8c7fa;"> src</span><span style="color:#a8c7fa;">=&quot;</span><span style="color:#a8c7fa;text-decoration:underline;">modules/default/defaultmodules.js</span><span style="color:#a8c7fa;">&quot;</span><span style="color:#7cacf8;">&gt;</span><span style="color:#7cacf8;">&lt;/script&gt;</span></div>
<div class="t" style="left:1339.54px;top:435.82px;font-family:'Liberation Mono',monospace;font-size:9.50px;letter-spacing:-0.146px;"><span style="color:#7cacf8;">&lt;script</span><span style="color:#a8c7fa;"> type</span><span style="color:#a8c7fa;">=&quot;</span><span style="color:#ee8f5c;">text/javascript</span><span style="color:#a8c7fa;">&quot;</span><span style="color:#a8c7fa;"> src</span><span style="color:#a8c7fa;">=&quot;</span><span style="color:#a8c7fa;text-decoration:underline;">modules/default/utils.js</span><span style="color:#a8c7fa;">&quot;</span><span style="color:#7cacf8;">&gt;</span><span style="color:#7cacf8;">&lt;/script&gt;</span></div>
<div class="t" style="left:1339.54px;top:449.25px;font-family:'Liberation Mono',monospace;font-size:9.50px;letter-spacing:-0.146px;"><span style="color:#7cacf8;">&lt;script</span><span style="color:#a8c7fa;"> type</span><span style="color:#a8c7fa;">=&quot;</span><span style="color:#ee8f5c;">text/javascript</span><span style="color:#a8c7fa;">&quot;</span><span style="color:#a8c7fa;"> src</span><span style="color:#a8c7fa;">=&quot;</span><span style="color:#a8c7fa;text-decoration:underline;">js/logger.js</span><span style="color:#a8c7fa;">&quot;</span><span style="color:#7cacf8;">&gt;</span><span style="color:#7cacf8;">&lt;/script&gt;</span></div>
<div class="t" style="left:1339.54px;top:462.67px;font-family:'Liberation Mono',monospace;font-size:9.50px;letter-spacing:-0.146px;"><span style="color:#7cacf8;">&lt;script</span><span style="color:#a8c7fa;"> type</span><span style="color:#a8c7fa;">=&quot;</span><span style="color:#ee8f5c;">text/javascript</span><span style="color:#a8c7fa;">&quot;</span><span style="color:#a8c7fa;"> src</span><span style="color:#a8c7fa;">=&quot;</span><span style="color:#a8c7fa;text-decoration:underline;">translations/translations.js</span><span style="color:#a8c7fa;">&quot;</span><span style="color:#7cacf8;">&gt;</span><span style="color:#7cacf8;">&lt;/script&gt;</span></div>
<div class="t" style="left:1339.54px;top:476.10px;font-family:'Liberation Mono',monospace;font-size:9.50px;letter-spacing:-0.146px;"><span style="color:#7cacf8;">&lt;script</span><span style="color:#a8c7fa;"> type</span><span style="color:#a8c7fa;">=&quot;</span><span style="color:#ee8f5c;">text/javascript</span><span style="color:#a8c7fa;">&quot;</span><span style="color:#a8c7fa;"> src</span><span style="color:#a8c7fa;">=&quot;</span><span style="color:#a8c7fa;text-decoration:underline;">js/translator.js</span><span style="color:#a8c7fa;">&quot;</span><span style="color:#7cacf8;">&gt;</span><span style="color:#7cacf8;">&lt;/script&gt;</span></div>
<div class="t" style="left:1339.54px;top:489.52px;font-family:'Liberation Mono',monospace;font-size:9.50px;letter-spacing:-0.146px;"><span style="color:#7cacf8;">&lt;script</span><span style="color:#a8c7fa;"> type</span><span style="color:#a8c7fa;">=&quot;</span><span style="color:#ee8f5c;">text/javascript</span><span style="color:#a8c7fa;">&quot;</span><span style="color:#a8c7fa;"> src</span><span style="color:#a8c7fa;">=&quot;</span><span style="color:#a8c7fa;text-decoration:underline;">js/class.js</span><span style="color:#a8c7fa;">&quot;</span><span style="color:#7cacf8;">&gt;</span><span style="color:#7cacf8;">&lt;/script&gt;</span></div>
<div class="t" style="left:1339.54px;top:502.95px;font-family:'Liberation Mono',monospace;font-size:9.50px;letter-spacing:-0.146px;"><span style="color:#7cacf8;">&lt;script</span><span style="color:#a8c7fa;"> type</span><span style="color:#a8c7fa;">=&quot;</span><span style="color:#ee8f5c;">text/javascript</span><span style="color:#a8c7fa;">&quot;</span><span style="color:#a8c7fa;"> src</span><span style="color:#a8c7fa;">=&quot;</span><span style="color:#a8c7fa;text-decoration:underline;">js/module.js</span><span style="color:#a8c7fa;">&quot;</span><span style="color:#7cacf8;">&gt;</span><span style="color:#7cacf8;">&lt;/script&gt;</span></div>
<div class="t" style="left:1339.54px;top:516.37px;font-family:'Liberation Mono',monospace;font-size:9.50px;letter-spacing:-0.146px;"><span style="color:#7cacf8;">&lt;script</span><span style="color:#a8c7fa;"> type</span><span style="color:#a8c7fa;">=&quot;</span><span style="color:#ee8f5c;">text/javascript</span><span style="color:#a8c7fa;">&quot;</span><span style="color:#a8c7fa;"> src</span><span style="color:#a8c7fa;">=&quot;</span><span style="color:#a8c7fa;text-decoration:underline;">js/loader.js</span><span style="color:#a8c7fa;">&quot;</span><span style="color:#7cacf8;">&gt;</span><span style="color:#7cacf8;">&lt;/script&gt;</span></div>
<div class="t" style="left:1339.54px;top:529.80px;font-family:'Liberation Mono',monospace;font-size:9.50px;letter-spacing:-0.146px;"><span style="color:#7cacf8;">&lt;script</span><span style="color:#a8c7fa;"> type</span><span style="color:#a8c7fa;">=&quot;</span><span style="color:#ee8f5c;">text/javascript</span><span style="color:#a8c7fa;">&quot;</span><span style="color:#a8c7fa;"> src</span><span style="color:#a8c7fa;">=&quot;</span><span style="color:#a8c7fa;text-decoration:underline;">js/socketclient.js</span><span style="color:#a8c7fa;">&quot;</span><span style="color:#7cacf8;">&gt;</span><span style="color:#7cacf8;">&lt;/script&gt;</span></div>
<div class="t" style="left:1339.54px;top:543.22px;font-family:'Liberation Mono',monospace;font-size:9.50px;letter-spacing:-0.146px;"><span style="color:#7cacf8;">&lt;script</span><span style="color:#a8c7fa;"> type</span><span style="color:#a8c7fa;">=&quot;</span><span style="color:#ee8f5c;">text/javascript</span><span style="color:#a8c7fa;">&quot;</span><span style="color:#a8c7fa;"> src</span><span style="color:#a8c7fa;">=&quot;</span><span style="color:#a8c7fa;text-decoration:underline;">js/animateCSS.js</span><span style="color:#a8c7fa;">&quot;</span><span style="color:#7cacf8;">&gt;</span><span style="color:#7cacf8;">&lt;/script&gt;</span></div>
<div class="t" style="left:1339.54px;top:556.65px;font-family:'Liberation Mono',monospace;font-size:9.50px;letter-spacing:-0.146px;"><span style="color:#7cacf8;">&lt;script</span><span style="color:#a8c7fa;"> type</span><span style="color:#a8c7fa;">=&quot;</span><span style="color:#ee8f5c;">text/javascript</span><span style="color:#a8c7fa;">&quot;</span><span style="color:#a8c7fa;"> src</span><span style="color:#a8c7fa;">=&quot;</span><span style="color:#a8c7fa;text-decoration:underline;">js/positions.js</span><span style="color:#a8c7fa;">&quot;</span><span style="color:#7cacf8;">&gt;</span><span style="color:#7cacf8;">&lt;/script&gt;</span></div>
<div class="t" style="left:1339.54px;top:570.07px;font-family:'Liberation Mono',monospace;font-size:9.50px;letter-spacing:-0.146px;"><span style="color:#7cacf8;">&lt;script</span><span style="color:#a8c7fa;"> type</span><span style="color:#a8c7fa;">=&quot;</span><span style="color:#ee8f5c;">text/javascript</span><span style="color:#a8c7fa;">&quot;</span><span style="color:#a8c7fa;"> src</span><span style="color:#a8c7fa;">=&quot;</span><span style="color:#a8c7fa;text-decoration:underline;">js/main.js</span><span style="color:#a8c7fa;">&quot;</span><span style="color:#7cacf8;">&gt;</span><span style="color:#7cacf8;">&lt;/script&gt;</span></div>
<div class="t" style="left:1339.54px;top:583.50px;font-family:'Liberation Mono',monospace;font-size:9.50px;letter-spacing:-0.146px;"><span style="color:#7cacf8;">&lt;script</span><span style="color:#a8c7fa;"> type</span><span style="color:#a8c7fa;">=&quot;</span><span style="color:#ee8f5c;">text/javascript</span><span style="color:#a8c7fa;">&quot;</span><span style="color:#a8c7fa;"> src</span><span style="color:#a8c7fa;">=&quot;</span><span style="color:#a8c7fa;text-decoration:underline;">modules/default/alert/alert.js</span><span style="color:#a8c7fa;">&quot;</span><span style="color:#7cacf8;">&gt;</span><span style="color:#7cacf8;">&lt;/script&gt;</span></div>
<div class="t" style="left:1339.54px;top:596.92px;font-family:'Liberation Mono',monospace;font-size:9.50px;letter-spacing:-0.146px;"><span style="color:#7cacf8;">&lt;script</span><span style="color:#a8c7fa;"> type</span><span style="color:#a8c7fa;">=&quot;</span><span style="color:#ee8f5c;">text/javascript</span><span style="color:#a8c7fa;">&quot;</span><span style="color:#a8c7fa;"> src</span><span style="color:#a8c7fa;">=&quot;</span><span style="color:#a8c7fa;text-decoration:underline;">modules/default/alert/notificationFx.js</span><span style="color:#a8c7fa;">&quot;</span><span style="color:#7cacf8;">&gt;</span><span style="color:#7cacf8;">&lt;/script&gt;</span></div>
<div class="t" style="left:1339.54px;top:610.35px;font-family:'Liberation Mono',monospace;font-size:9.50px;letter-spacing:-0.146px;"><span style="color:#7cacf8;">&lt;script</span><span style="color:#a8c7fa;"> type</span><span style="color:#a8c7fa;">=&quot;</span><span style="color:#ee8f5c;">text/javascript</span><span style="color:#a8c7fa;">&quot;</span><span style="color:#a8c7fa;"> src</span><span style="color:#a8c7fa;">=&quot;</span><span style="color:#a8c7fa;text-decoration:underline;">modules/default/updatenotification/updatenotification.js</span><span style="color:#a8c7fa;">&quot;</span><span style="color:#7cacf8;">&gt;</span><span style="color:#7cacf8;">&lt;/script&gt;</span></div>
<div class="t" style="left:1339.54px;top:623.77px;font-family:'Liberation Mono',monospace;font-size:9.50px;letter-spacing:-0.146px;"><span style="color:#7cacf8;">&lt;script</span><span style="color:#a8c7fa;"> type</span><span style="color:#a8c7fa;">=&quot;</span><span style="color:#ee8f5c;">text/javascript</span><span style="color:#a8c7fa;">&quot;</span><span style="color:#a8c7fa;"> src</span><span style="color:#a8c7fa;">=&quot;</span><span style="color:#a8c7fa;text-decoration:underline;">modules/default/clock/clock.js</span><span style="color:#a8c7fa;">&quot;</span><span style="color:#7cacf8;">&gt;</span><span style="color:#7cacf8;">&lt;/script&gt;</span></div>
<div class="t" style="left:1339.54px;top:637.20px;font-family:'Liberation Mono',monospace;font-size:9.50px;letter-spacing:-0.146px;"><span style="color:#7cacf8;">&lt;script</span><span style="color:#a8c7fa;"> type</span><span style="color:#a8c7fa;">=&quot;</span><span style="color:#ee8f5c;">text/javascript</span><span style="color:#a8c7fa;">&quot;</span><span style="color:#a8c7fa;"> src</span><span style="color:#a8c7fa;">=&quot;</span><span style="color:#a8c7fa;text-decoration:underline;">vendor/node_modules/moment/min/moment-with-locales.js</span><span style="color:#a8c7fa;">&quot;</span><span style="color:#7cacf8;">&gt;</span><span style="color:#7cacf8;">&lt;/script&gt;</span></div>
<div class="r" style="left:1307.00px;top:638.00px;width:778.00px;height:19.00px;background:#282828;"></div>
<div class="r" style="left:1307.00px;top:637.00px;width:778.00px;height:1.00px;background:#5e5e5e;"></div>
<svg style="left:2073px;top:23px" width="12" height="614" viewBox="0 0 12 614"><path d="M3.3 8.2 L6 5.2 L8.7 8.2 Z" fill="#9e9e9e"/><path d="M3.3 605.3 L6 608.3 L8.7 605.3 Z" fill="#e3e3e3"/></svg>
<div class="r" style="left:2075.00px;top:34.80px;width:8.00px;height:441.20px;background:#6a6a6a;"></div>
<div class="r" style="left:1834.00px;top:638.00px;width:116.00px;height:19.00px;background:#004a77;"></div>
<div class="t" id="cr0" style="top:646.87px;font-size:12.21px;color:#7cacf8;left:1313.00px;transform:scaleX(0.9636);transform-origin:0 0;">html</div>
<div class="t" id="cr1" style="top:646.87px;font-size:12.21px;color:#7cacf8;left:1346.00px;transform:scaleX(0.8537);transform-origin:0 0;">body</div>
<div class="t" id="cr2" style="top:646.87px;font-size:12.21px;color:#7cacf8;left:1380.00px;transform:scaleX(0.8716);transform-origin:0 0;">div.region.top.bar</div>
<div class="t" id="cr3" style="top:646.87px;font-size:12.21px;color:#7cacf8;left:1474.00px;transform:scaleX(0.8814);transform-origin:0 0;">div.region.top.left</div>
<div class="t" id="cr4" style="top:646.87px;font-size:12.21px;color:#7cacf8;left:1569.00px;transform:scaleX(0.8538);transform-origin:0 0;">div.container</div>
<div class="t" id="cr5" style="left:1639.25px;top:646.87px;font-size:12.20px;transform:scaleX(0.8470);transform-origin:0 0;"><span style="color:#7cacf8">div</span><span style="color:#e3e3e3">#module_3_calendar</span><span style="color:#e5bd2a">.module.calendar</span></div>
<div class="t" id="cr6" style="top:646.87px;font-size:12.21px;color:#a8c7fa;left:1840.00px;transform:scaleX(0.8507);transform-origin:0 0;">header.module-header</div>
<div class="r" style="left:2086.00px;top:23.00px;width:474.00px;height:22.00px;background:#3c3c3c;"></div>
<div class="r" style="left:2086.00px;top:45.00px;width:474.00px;height:1.00px;background:#5e5e5e;"></div>
<div class="t" id="stab0" style="top:33.77px;font-size:11.63px;color:#a8c7fa;left:2094.80px;transform:scaleX(0.8749);transform-origin:0 0;-webkit-text-stroke:0.25px #a8c7fa;">Styles</div>
<div class="t" id="stab1" style="top:33.77px;font-size:11.63px;color:#d0d0d0;left:2140.00px;transform:scaleX(0.9127);transform-origin:0 0;-webkit-text-stroke:0.25px #d0d0d0;">Computed</div>
<div class="t" id="stab2" style="top:33.77px;font-size:11.63px;color:#d0d0d0;left:2206.40px;transform:scaleX(0.8916);transform-origin:0 0;-webkit-text-stroke:0.25px #d0d0d0;">Layout</div>
<div class="t" id="stab3" style="top:33.77px;font-size:11.63px;color:#d0d0d0;left:2256.80px;transform:scaleX(0.8857);transform-origin:0 0;-webkit-text-stroke:0.25px #d0d0d0;">Event Listeners</div>
<div class="t" id="stab4" style="top:33.77px;font-size:11.63px;color:#d0d0d0;left:2346.00px;transform:scaleX(0.9022);transform-origin:0 0;-webkit-text-stroke:0.25px #d0d0d0;">DOM Breakpoints</div>
<div class="t" id="stab5" style="top:33.77px;font-size:11.63px;color:#d0d0d0;left:2447.20px;transform:scaleX(0.9185);transform-origin:0 0;-webkit-text-stroke:0.25px #d0d0d0;">Properties</div>
<div class="r" style="left:2086.30px;top:42.80px;width:45.50px;height:2.20px;background:#a8c7fa;border-radius:2px 2px 0 0;"></div>
<svg style="left:2505px;top:28px" width="16" height="14" viewBox="2505 28 16 14"><path d="M2508.6 30.6 L2512.4 34.4 L2508.6 38.2 M2512.8 30.6 L2516.6 34.4 L2512.8 38.2" fill="none" stroke="#c7c7c7" stroke-width="1.2"/></svg>
<div class="r" style="left:2086.00px;top:68.00px;width:463.00px;height:1.00px;background:#5e5e5e;"></div>
<div class="r" style="left:2090.00px;top:49.20px;width:334.70px;height:15.80px;background:#3c3c3c;border-radius:8px;"></div>
<svg style="left:2095px;top:50px" width="20" height="14" viewBox="2095 50 20 14" fill="none" stroke="#c7c7c7"><path d="M2100.2 53.2 H2106.8" stroke-width="0.8" stroke="#9a9a9a"/><path d="M2100.2 53.2 L2103.5 56.8 L2106.8 53.2" stroke-width="1.1" stroke-linejoin="round"/><path d="M2103.5 56.8 V60.8" stroke-width="1.3"/></svg>
<div class="t" id="st_filter" style="top:55.97px;font-size:11.63px;color:#c7c7c7;left:2113.80px;transform:scaleX(0.9474);transform-origin:0 0;">Filter</div>
<div class="t" style="left:2429.20px;top:57.80px;font-family:'Liberation Mono',monospace;font-size:9.40px;letter-spacing:-1.750px;"><span style="color:#e3e3e3;">:hov</span></div>
<div class="t" style="left:2454.00px;top:57.83px;font-family:'Liberation Mono',monospace;font-size:9.30px;letter-spacing:-1.750px;"><span style="color:#e3e3e3;">.cls</span></div>
<svg style="left:2476px;top:48px" width="74" height="20" viewBox="2476 48 74 20" fill="none" stroke="#c7c7c7"><path d="M2486 52.3 V61.6 M2481.3 57 H2490.7" stroke-width="1.4"/><path d="M2495.4 61 L2495.4 64.2 L2492.2 64.2 Z" fill="#c7c7c7" stroke="none"/><path d="M2505.6 51.6 H2515.3 V57.3 H2505.6 Z M2507.5 57.3 V59.2 H2509.3 V63.6 H2511.6 V59.2 H2513.4 V57.3" stroke-width="1.2" stroke-linejoin="round"/><path d="M2506.7 53.6 H2514.2" stroke-width="0.9"/><rect x="2527.6" y="51.6" width="11.2" height="11.6" rx="1.4" stroke-width="1.2"/><path d="M2535.3 51.6 V63.2" stroke-width="1.2"/><path d="M2533.2 54.6 L2530.3 57.4 L2533.2 60.2 Z" fill="#c7c7c7" stroke="none"/></svg>
<div class="r" style="left:2549.00px;top:46.00px;width:11.00px;height:611.00px;background:#383838;"></div>
<svg style="left:2549px;top:46px" width="11" height="611" viewBox="0 0 11 611"><path d="M2.8 8.5 L5.5 5.6 L8.2 8.5 Z" fill="#9e9e9e"/><path d="M2.8 602.6 L5.5 605.5 L8.2 602.6 Z" fill="#e3e3e3"/></svg>
<div class="r" style="left:2551.00px;top:58.00px;width:8.00px;height:228.00px;background:#6a6a6a;"></div>
<div class="t" style="left:2089.20px;top:78.57px;font-family:'Liberation Mono',monospace;font-size:9.50px;letter-spacing:-0.146px;"><span style="color:#9aa0a6;">element.style</span><span style="color:#e3e3e3;"> {</span></div>
<div class="t" style="left:2104.30px;top:93.37px;font-family:'Liberation Mono',monospace;font-size:9.50px;letter-spacing:-0.146px;"><span style="color:#5ec6f0;">display</span><span style="color:#e3e3e3;">: </span><span style="color:#e3e3e3;">block</span><span style="color:#e3e3e3;">;</span></div>
<div class="t" style="left:2089.20px;top:105.67px;font-family:'Liberation Mono',monospace;font-size:9.50px;letter-spacing:-0.146px;"><span style="color:#e3e3e3;">}</span></div>
<div class="r" style="left:2086.00px;top:114.60px;width:463.00px;height:1.00px;background:#5e5e5e;"></div>
<div class="t" style="left:2089.20px;top:125.37px;font-family:'Liberation Mono',monospace;font-size:9.50px;letter-spacing:-0.146px;"><span style="color:#e3e3e3;">header {</span></div>
<div class="t" id="t64" style="top:126.17px;font-size:9.50px;color:#c7c7c7;font-family:'Liberation Mono', monospace;right:14.20px;letter-spacing:-0.146px;text-decoration:underline;">main.css:116</div>
<div class="t" style="left:2104.30px;top:140.37px;font-family:'Liberation Mono',monospace;font-size:9.50px;letter-spacing:-0.146px;"><span style="color:#5ec6f0;">text-transform</span><span style="color:#e3e3e3;">: </span><span style="color:#e3e3e3;">uppercase</span><span style="color:#e3e3e3;">;</span></div>
<div class="t" style="left:2104.30px;top:153.37px;font-family:'Liberation Mono',monospace;font-size:9.50px;letter-spacing:-0.146px;"><span style="color:#5ec6f0;">font-size</span><span style="color:#e3e3e3;">: </span><span style="color:#e3e3e3;">var(--font-size-xsmall)</span><span style="color:#e3e3e3;">;</span></div>
<div class="t" style="left:2104.30px;top:166.37px;font-family:'Liberation Mono',monospace;font-size:9.50px;letter-spacing:-0.146px;"><span style="color:#5ec6f0;">font-family</span><span style="color:#e3e3e3;">: </span><span style="color:#e3e3e3;">var(--font-primary), Arial, Helvetica, sans-serif</span><span style="color:#e3e3e3;">;</span></div>
<div class="t" style="left:2104.30px;top:179.37px;font-family:'Liberation Mono',monospace;font-size:9.50px;letter-spacing:-0.146px;"><span style="color:#5ec6f0;">font-weight</span><span style="color:#e3e3e3;">: </span><span style="color:#e3e3e3;">400</span><span style="color:#e3e3e3;">;</span></div>
<div class="t" style="left:2104.30px;top:192.37px;font-family:'Liberation Mono',monospace;font-size:9.50px;letter-spacing:-0.146px;"><span style="color:#5ec6f0;">border-bottom</span><span style="color:#e3e3e3;">: </span></div>
<svg style="left:2188.12px;top:186.60px" width="8" height="8" viewBox="0 0 8 8"><path d="M1.4 0.7 V7.3 L5.3 4 Z" fill="#c7c7c7"/></svg>
<div class="t" style="left:2197.35px;top:192.37px;font-family:'Liberation Mono',monospace;font-size:9.50px;letter-spacing:-0.146px;"><span style="color:#e3e3e3;">1px solid </span></div>
<div class="r" style="left:2255.40px;top:187.40px;width:7.50px;height:7.40px;background:#666;box-sizing:border-box;border:1px solid #888;"></div>
<div class="t" style="left:2265.30px;top:192.37px;font-family:'Liberation Mono',monospace;font-size:9.50px;letter-spacing:-0.146px;"><span style="color:#e3e3e3;">var(--color-text-dimmed);</span></div>
<div class="t" style="left:2104.30px;top:205.37px;font-family:'Liberation Mono',monospace;font-size:9.50px;letter-spacing:-0.146px;"><span style="color:#5ec6f0;">line-height</span><span style="color:#e3e3e3;">: </span><span style="color:#e3e3e3;">15px</span><span style="color:#e3e3e3;">;</span></div>
<div class="t" style="left:2104.30px;top:218.37px;font-family:'Liberation Mono',monospace;font-size:9.50px;letter-spacing:-0.146px;"><span style="color:#5ec6f0;">padding-bottom</span><span style="color:#e3e3e3;">: </span><span style="color:#e3e3e3;">5px</span><span style="color:#e3e3e3;">;</span></div>
<div class="t" style="left:2104.30px;top:231.37px;font-family:'Liberation Mono',monospace;font-size:9.50px;letter-spacing:-0.146px;"><span style="color:#5ec6f0;">margin-bottom</span><span style="color:#e3e3e3;">: </span><span style="color:#e3e3e3;">10px</span><span style="color:#e3e3e3;">;</span></div>
<div class="t" style="left:2104.30px;top:244.37px;font-family:'Liberation Mono',monospace;font-size:9.50px;letter-spacing:-0.146px;"><span style="color:#5ec6f0;">color</span><span style="color:#e3e3e3;">: </span></div>
<div class="r" style="left:2146.19px;top:239.40px;width:7.50px;height:7.40px;background:#999;box-sizing:border-box;border:1px solid #aaa;"></div>
<div class="t" style="left:2156.39px;top:244.37px;font-family:'Liberation Mono',monospace;font-size:9.50px;letter-spacing:-0.146px;"><span style="color:#e3e3e3;">var(--color-text);</span></div>
<div class="t" style="left:2089.20px;top:257.37px;font-family:'Liberation Mono',monospace;font-size:9.50px;letter-spacing:-0.146px;"><span style="color:#e3e3e3;">}</span></div>
<div class="r" style="left:2086.00px;top:265.20px;width:463.00px;height:1.00px;background:#5e5e5e;"></div>
<div class="t" style="left:2089.20px;top:275.97px;font-family:'Liberation Mono',monospace;font-size:9.50px;letter-spacing:-0.146px;font-style:italic;"><span style="color:#e3e3e3;">header {</span></div>
<div class="t" id="t65" style="top:276.67px;font-size:9.50px;color:#9aa0a6;font-family:'Liberation Mono', monospace;right:14.20px;letter-spacing:-0.146px;font-style:italic;">user agent stylesheet</div>
<div class="t" style="left:2104.30px;top:291.17px;font-family:'Liberation Mono',monospace;font-size:9.50px;letter-spacing:-0.146px;font-style:italic;"><span style="color:#5ec6f0;">display</span><span style="color:#e3e3e3;">: block;</span></div>
<div class="r" style="left:2104.30px;top:290.30px;width:83.32px;height:1.00px;background:#c7c7c7;"></div>
<div class="t" style="left:2104.30px;top:304.17px;font-family:'Liberation Mono',monospace;font-size:9.50px;letter-spacing:-0.146px;font-style:italic;"><span style="color:#5ec6f0;">unicode-bidi</span><span style="color:#e3e3e3;">: </span><span style="color:#e3e3e3;">isolate</span><span style="color:#e3e3e3;">;</span></div>
<div class="t" style="left:2089.20px;top:316.97px;font-family:'Liberation Mono',monospace;font-size:9.50px;letter-spacing:-0.146px;font-style:italic;"><span style="color:#e3e3e3;">}</span></div>
<div class="r" style="left:2086.00px;top:325.20px;width:463.00px;height:1.00px;background:#5e5e5e;"></div>
<div class="r" style="left:2086.00px;top:326.00px;width:463.00px;height:19.00px;background:#333333;"></div>
<div class="t" id="inh326" style="top:334.35px;font-size:11.39px;color:#c7c7c7;left:2089.00px;transform:scaleX(0.9622);transform-origin:0 0;">Inherited from</div>
<div class="t" style="left:2161.20px;top:336.07px;font-family:'Liberation Mono',monospace;font-size:9.50px;letter-spacing:-0.146px;"><span style="color:#7cacf8;">div#module_3_calendar.modu…</span></div>
<div class="r" style="left:2086.00px;top:345.00px;width:463.00px;height:1.00px;background:#5e5e5e;"></div>
<div class="t" style="left:2089.20px;top:356.17px;font-family:'Liberation Mono',monospace;font-size:9.50px;letter-spacing:-0.146px;"><span style="color:#e3e3e3;">.module:not(.hidden) {</span></div>
<div class="t" id="t67" style="top:356.87px;font-size:9.50px;color:#c7c7c7;font-family:'Liberation Mono', monospace;right:14.20px;letter-spacing:-0.146px;text-decoration:underline;">main.css:145</div>
<div class="t" style="left:2104.30px;top:370.37px;font-family:'Liberation Mono',monospace;font-size:9.50px;letter-spacing:-0.146px;"><span style="color:#5ec6f0;">pointer-events</span><span style="color:#e3e3e3;">: </span><span style="color:#e3e3e3;">auto</span><span style="color:#e3e3e3;">;</span></div>
<div class="t" style="left:2089.20px;top:382.97px;font-family:'Liberation Mono',monospace;font-size:9.50px;letter-spacing:-0.146px;"><span style="color:#e3e3e3;">}</span></div>
<div class="r" style="left:2086.00px;top:392.00px;width:463.00px;height:1.00px;background:#5e5e5e;"></div>
<div class="r" style="left:2086.00px;top:393.00px;width:463.00px;height:18.00px;background:#333333;"></div>
<div class="t" id="inh393" style="top:401.05px;font-size:11.39px;color:#c7c7c7;left:2089.00px;transform:scaleX(0.9622);transform-origin:0 0;">Inherited from</div>
<div class="t" style="left:2161.20px;top:402.77px;font-family:'Liberation Mono',monospace;font-size:9.50px;letter-spacing:-0.146px;"><span style="color:#7cacf8;">div.region.top.left</span></div>
<div class="r" style="left:2086.00px;top:411.00px;width:463.00px;height:1.00px;background:#5e5e5e;"></div>
<div class="t" style="left:2089.20px;top:422.27px;font-family:'Liberation Mono',monospace;font-size:9.50px;letter-spacing:-0.146px;"><span style="color:#e3e3e3;">.region.left {</span></div>
<div class="t" id="t69" style="top:423.37px;font-size:9.50px;color:#c7c7c7;font-family:'Liberation Mono', monospace;right:14.20px;letter-spacing:-0.146px;text-decoration:underline;">main.css:233</div>
<div class="t" style="left:2104.30px;top:437.07px;font-family:'Liberation Mono',monospace;font-size:9.50px;letter-spacing:-0.146px;"><span style="color:#5ec6f0;">text-align</span><span style="color:#e3e3e3;">: </span><span style="color:#e3e3e3;">left</span><span style="color:#e3e3e3;">;</span></div>
<div class="t" style="left:2089.20px;top:449.97px;font-family:'Liberation Mono',monospace;font-size:9.50px;letter-spacing:-0.146px;"><span style="color:#e3e3e3;">}</span></div>
<div class="r" style="left:2086.00px;top:457.80px;width:463.00px;height:1.00px;background:#5e5e5e;"></div>
<div class="r" style="left:2086.00px;top:458.80px;width:463.00px;height:19.20px;background:#333333;"></div>
<div class="t" id="inh458" style="top:467.05px;font-size:11.39px;color:#c7c7c7;left:2089.00px;transform:scaleX(0.9622);transform-origin:0 0;">Inherited from</div>
<div class="t" style="left:2161.20px;top:468.77px;font-family:'Liberation Mono',monospace;font-size:9.50px;letter-spacing:-0.146px;"><span style="color:#7cacf8;">div.region.top.bar</span></div>
<div class="r" style="left:2086.00px;top:478.00px;width:463.00px;height:1.00px;background:#5e5e5e;"></div>
<div class="t" style="left:2089.20px;top:488.37px;font-family:'Liberation Mono',monospace;font-size:9.50px;letter-spacing:-0.146px;"><span style="color:#e3e3e3;">.region.bar {</span></div>
<div class="t" id="t71" style="top:489.57px;font-size:9.50px;color:#c7c7c7;font-family:'Liberation Mono', monospace;right:14.20px;letter-spacing:-0.146px;text-decoration:underline;">main.css:209</div>
<div class="t" style="left:2104.30px;top:502.37px;font-family:'Liberation Mono',monospace;font-size:9.50px;letter-spacing:-0.146px;"><span style="color:#4a8aa6;">width</span><span style="color:#8f8f8f;">: </span><span style="color:#8f8f8f;">100%</span><span style="color:#8f8f8f;">;</span></div>
<div class="t" style="left:2104.30px;top:516.07px;font-family:'Liberation Mono',monospace;font-size:9.50px;letter-spacing:-0.146px;"><span style="color:#5ec6f0;">text-align</span><span style="color:#e3e3e3;">: </span><span style="color:#e3e3e3;">center</span><span style="color:#e3e3e3;">;</span></div>
<div class="r" style="left:2104.30px;top:514.30px;width:105.55px;height:1.00px;background:#c7c7c7;"></div>
<div class="t" style="left:2089.20px;top:528.67px;font-family:'Liberation Mono',monospace;font-size:9.50px;letter-spacing:-0.146px;"><span style="color:#e3e3e3;">}</span></div>
<div class="r" style="left:2086.00px;top:537.00px;width:463.00px;height:1.00px;background:#5e5e5e;"></div>
<div class="r" style="left:2086.00px;top:538.00px;width:463.00px;height:19.60px;background:#333333;"></div>
<div class="t" id="inh538" style="top:545.85px;font-size:11.39px;color:#c7c7c7;left:2089.00px;transform:scaleX(0.9622);transform-origin:0 0;">Inherited from</div>
<div class="t" id="inhb" style="top:546.24px;font-size:12.00px;color:#7cacf8;left:2161.00px;transform:scaleX(0.8527);transform-origin:0 0;">body</div>
<div class="r" style="left:2086.00px;top:557.60px;width:463.00px;height:1.00px;background:#5e5e5e;"></div>
<div class="t" style="left:2088.70px;top:567.37px;font-family:'Liberation Mono',monospace;font-size:9.50px;letter-spacing:-0.146px;"><span style="color:#e3e3e3;">body {</span></div>
<div class="t" id="t74" style="top:569.97px;font-size:9.50px;color:#c7c7c7;font-family:'Liberation Mono', monospace;right:14.20px;letter-spacing:-0.146px;text-decoration:underline;">main.css:33</div>
<div class="t" style="left:2104.30px;top:582.17px;font-family:'Liberation Mono',monospace;font-size:9.50px;letter-spacing:-0.146px;"><span style="color:#4a8aa6;">margin</span><span style="color:#8f8f8f;">: </span></div>
<svg style="left:2149.24px;top:576.40px" width="8" height="8" viewBox="0 0 8 8"><path d="M1.4 0.7 V7.3 L5.3 4 Z" fill="#9e9e9e"/></svg>
<div class="t" style="left:2158.46px;top:582.17px;font-family:'Liberation Mono',monospace;font-size:9.50px;letter-spacing:-0.146px;"><span style="color:#8f8f8f;">var(--gap-body-top) var(--gap-body-right) var(--gap-body-bottom) var(</span></div>
<div class="t" style="left:2121.30px;top:594.77px;font-family:'Liberation Mono',monospace;font-size:9.50px;letter-spacing:-0.146px;"><span style="color:#8f8f8f;">--gap-body-left);</span></div>
<div class="t" style="left:2104.30px;top:607.77px;font-family:'Liberation Mono',monospace;font-size:9.50px;letter-spacing:-0.146px;"><span style="color:#4a8aa6;">position</span><span style="color:#8f8f8f;">: </span><span style="color:#8f8f8f;">absolute;</span></div>
<div class="t" style="left:2104.30px;top:620.67px;font-family:'Liberation Mono',monospace;font-size:9.50px;letter-spacing:-0.146px;"><span style="color:#4a8aa6;">height</span><span style="color:#8f8f8f;">: </span><span style="color:#8f8f8f;">calc(100% - var(--gap-body-top) - var(--gap-body-bottom));</span></div>
<div class="t" style="left:2104.30px;top:633.57px;font-family:'Liberation Mono',monospace;font-size:9.50px;letter-spacing:-0.146px;"><span style="color:#4a8aa6;">width</span><span style="color:#8f8f8f;">: </span><span style="color:#8f8f8f;">calc(100% - var(--gap-body-right) - var(--gap-body-left));</span></div>
<div class="t" style="left:2104.30px;top:646.37px;font-family:'Liberation Mono',monospace;font-size:9.50px;letter-spacing:-0.146px;"><span style="color:#4a8aa6;">background</span><span style="color:#8f8f8f;">: </span></div>
<svg style="left:2171.46px;top:640.60px" width="8" height="8" viewBox="0 0 8 8"><path d="M1.4 0.7 V7.3 L5.3 4 Z" fill="#9e9e9e"/></svg>
<div class="r" style="left:2181.51px;top:640.40px;width:7.60px;height:7.50px;background:#000;box-sizing:border-box;border:1px solid #777;"></div>
<div class="t" style="left:2192.07px;top:646.37px;font-family:'Liberation Mono',monospace;font-size:9.50px;letter-spacing:-0.146px;"><span style="color:#8f8f8f;">var(--color-background);</span></div>
<div class="t" style="left:2104.30px;top:659.37px;font-family:'Liberation Mono',monospace;font-size:9.50px;letter-spacing:-0.146px;"><span style="color:#4a8aa6;">color</span><span style="color:#8f8f8f;">: </span><span style="color:#8f8f8f;">  var(--color-text);</span></div>
<div class="r" style="left:2086.00px;top:657.00px;width:474.00px;height:1.00px;background:#5e5e5e;"></div>
<div class="r" style="left:1307.00px;top:658.00px;width:1253.00px;height:22.00px;background:#3c3c3c;"></div>
<div class="r" style="left:1307.00px;top:680.00px;width:1253.00px;height:1.00px;background:#5e5e5e;"></div>
<svg style="left:1307px;top:658px" width="30" height="22" viewBox="0 0 30 22"><circle cx="13.4" cy="6.6" r="1.1" fill="#c7c7c7"/><circle cx="13.4" cy="10.6" r="1.1" fill="#c7c7c7"/><circle cx="13.4" cy="14.6" r="1.1" fill="#c7c7c7"/></svg>
<div class="t" id="drw_console" style="top:668.97px;font-size:11.63px;color:#a8c7fa;left:1338.40px;transform:scaleX(0.8908);transform-origin:0 0;">Console</div>
<div class="r" style="left:1331.00px;top:678.00px;width:54.00px;height:2.50px;background:#a8c7fa;border-radius:2px 2px 0 0;"></div>
<svg style="left:2540px;top:661px" width="14" height="14" viewBox="2540 661 14 14"><path d="M2543.2 664.3 L2551.4 672.5 M2551.4 664.3 L2543.2 672.5" stroke="#c7c7c7" stroke-width="1.4"/></svg>
<div class="r" style="left:1307.00px;top:703.00px;width:1253.00px;height:1.00px;background:#5e5e5e;"></div>
<div class="r" style="left:1444.00px;top:683.00px;width:929.00px;height:17.00px;background:#3c3c3c;border-radius:9px;"></div>
<svg style="left:1307px;top:681px" width="160" height="22" viewBox="1307 681 160 22" fill="none" stroke="#c7c7c7"><rect x="1314.9" y="685.7" width="11.2" height="11.6" rx="1" stroke-width="1.2"/><path d="M1318.2 685.7 V697.3" stroke-width="1.2"/><path d="M1320.6 688.8 L1323.6 691.5 L1320.6 694.2 Z" fill="#c7c7c7" stroke="none"/><circle cx="1344.4" cy="691.5" r="5.8" stroke-width="1.2"/><path d="M1340.3 695.6 L1348.5 687.4" stroke-width="1.2"/><path d="M1359.6 685 V699.3 M1406.3 685 V699.3 M1438.5 685 V699.3" stroke="#5e5e5e" stroke-width="1"/><path d="M1391.2 691.6 H1396.6 L1393.9 694.8 Z" fill="#c7c7c7" stroke="none"/><path d="M1415.2 691.5 Q1422.6 683.6 1430 691.5 Q1422.6 699.4 1415.2 691.5 Z" stroke-width="1.2"/><circle cx="1422.6" cy="691.5" r="2.3" stroke-width="1.3"/><path d="M1454.6 687.8 H1461.4" stroke-width="0.8" stroke="#9a9a9a"/><path d="M1454.6 687.8 L1458 691.5 L1461.4 687.8" stroke-width="1.1" stroke-linejoin="round"/><path d="M1458 691.5 V695.7" stroke-width="1.3"/></svg>
<div class="t" id="ct_top" style="top:690.57px;font-size:11.63px;color:#e3e3e3;left:1369.80px;transform:scaleX(0.9989);transform-origin:0 0;">top</div>
<div class="t" id="ct_filter" style="top:691.47px;font-size:11.63px;color:#c7c7c7;left:1468.30px;transform:scaleX(0.9106);transform-origin:0 0;">Filter</div>
<div class="t" id="ct_levels" style="top:691.57px;font-size:11.63px;color:#e3e3e3;left:2383.40px;transform:scaleX(0.8924);transform-origin:0 0;">Default levels</div>
<svg style="left:2440px;top:681px" width="120" height="22" viewBox="2440 681 120 22" fill="none" stroke="#c7c7c7"><path d="M2449.4 692 H2455 L2452.2 695.2 Z" fill="#c7c7c7" stroke="none"/><path d="M2467.5 685 V699.3 M2529.8 685 V699.3" stroke="#5e5e5e" stroke-width="1"/><circle cx="2544.4" cy="691.4" r="2" stroke-width="1.3"/><path d="M2543.3 685 H2545.5 L2546 686.7 L2547.7 687.6 L2549.3 687.1 L2550.4 689 L2549.2 690.3 V692.5 L2550.4 693.8 L2549.3 695.7 L2547.7 695.2 L2546 696.1 L2545.5 697.8 H2543.3 L2542.8 696.1 L2541.1 695.2 L2539.5 695.7 L2538.4 693.8 L2539.6 692.5 V690.3 L2538.4 689 L2539.5 687.1 L2541.1 687.6 L2542.8 686.7 Z" stroke-width="1.2" stroke-linejoin="round"/></svg>
<div class="t" id="ct_noiss" style="top:691.57px;font-size:11.63px;color:#e3e3e3;left:2477.40px;transform:scaleX(0.8269);transform-origin:0 0;">No Issues</div>
<div class="r" style="left:1331.00px;top:705.50px;width:1193.00px;height:1.00px;background:#5e5e5e;"></div>
<div class="t" style="left:1331.00px;top:716.57px;font-family:'Liberation Mono',monospace;font-size:9.50px;letter-spacing:-0.146px;"><span style="color:#e3e3e3;">Load stylesheet: css/custom.css</span></div>
<div class="t" id="t80" style="top:716.57px;font-size:9.50px;color:#a8a8a8;font-family:'Liberation Mono', monospace;right:38.20px;letter-spacing:-0.146px;">loader.js:195</div>
<div class="r" style="left:1331.00px;top:724.41px;width:1193.00px;height:1.00px;background:#5e5e5e;"></div>
<div class="t" style="left:1331.00px;top:735.48px;font-family:'Liberation Mono',monospace;font-size:9.50px;letter-spacing:-0.146px;"><span style="color:#e3e3e3;">Starting module: alert</span></div>
<div class="t" id="t81" style="top:735.48px;font-size:9.50px;color:#a8a8a8;font-family:'Liberation Mono', monospace;right:38.20px;letter-spacing:-0.146px;">alert.js:43</div>
<div class="r" style="left:1331.00px;top:743.32px;width:1193.00px;height:1.00px;background:#5e5e5e;"></div>
<div class="t" style="left:1331.00px;top:754.39px;font-family:'Liberation Mono',monospace;font-size:9.50px;letter-spacing:-0.146px;"><span style="color:#e3e3e3;">Starting module: updatenotification</span></div>
<div class="t" id="t82" style="top:754.39px;font-size:9.50px;color:#a8a8a8;font-family:'Liberation Mono', monospace;right:38.20px;letter-spacing:-0.146px;">updatenotification.js:19</div>
<div class="r" style="left:1331.00px;top:762.23px;width:1193.00px;height:1.00px;background:#5e5e5e;"></div>
<div class="t" style="left:1331.00px;top:773.30px;font-family:'Liberation Mono',monospace;font-size:9.50px;letter-spacing:-0.146px;"><span style="color:#e3e3e3;">Starting module: clock</span></div>
<div class="t" id="t83" style="top:773.30px;font-size:9.50px;color:#a8a8a8;font-family:'Liberation Mono', monospace;right:38.20px;letter-spacing:-0.146px;">clock.js:43</div>
<div class="r" style="left:1331.00px;top:781.14px;width:1193.00px;height:1.00px;background:#5e5e5e;"></div>
<div class="t" style="left:1331.00px;top:792.21px;font-family:'Liberation Mono',monospace;font-size:9.50px;letter-spacing:-0.146px;"><span style="color:#e3e3e3;">Starting module: calendar</span></div>
<div class="t" id="t84" style="top:792.21px;font-size:9.50px;color:#a8a8a8;font-family:'Liberation Mono', monospace;right:38.20px;letter-spacing:-0.146px;">calendar.js:96</div>
<div class="r" style="left:1331.00px;top:800.05px;width:1193.00px;height:1.00px;background:#5e5e5e;"></div>
<div class="t" style="left:1331.00px;top:811.12px;font-family:'Liberation Mono',monospace;font-size:9.50px;letter-spacing:-0.146px;"><span style="color:#e3e3e3;">Starting module: compliments</span></div>
<div class="t" id="t85" style="top:811.12px;font-size:9.50px;color:#a8a8a8;font-family:'Liberation Mono', monospace;right:38.20px;letter-spacing:-0.146px;">compliments.js:40</div>
<div class="r" style="left:1331.00px;top:818.96px;width:1193.00px;height:1.00px;background:#5e5e5e;"></div>
<div class="t" style="left:1331.00px;top:830.03px;font-family:'Liberation Mono',monospace;font-size:9.50px;letter-spacing:-0.146px;"><span style="color:#e3e3e3;">Weather provider: Open-Meteo initialized.</span></div>
<div class="t" id="t86" style="top:830.03px;font-size:9.50px;color:#a8a8a8;font-family:'Liberation Mono', monospace;right:38.20px;letter-spacing:-0.146px;">weatherprovider.js:28</div>
<div class="r" style="left:1331.00px;top:837.87px;width:1193.00px;height:1.00px;background:#5e5e5e;"></div>
<div class="t" style="left:1331.00px;top:848.94px;font-family:'Liberation Mono',monospace;font-size:9.50px;letter-spacing:-0.146px;"><span style="color:#e3e3e3;">Weather provider: Open-Meteo started.</span></div>
<div class="t" id="t87" style="top:848.94px;font-size:9.50px;color:#a8a8a8;font-family:'Liberation Mono', monospace;right:38.20px;letter-spacing:-0.146px;">weatherprovider.js:39</div>
<div class="r" style="left:1331.00px;top:856.78px;width:1193.00px;height:1.00px;background:#5e5e5e;"></div>
<div class="t" style="left:1331.00px;top:867.85px;font-family:'Liberation Mono',monospace;font-size:9.50px;letter-spacing:-0.146px;"><span style="color:#e3e3e3;">Weather provider: Open-Meteo initialized.</span></div>
<div class="t" id="t88" style="top:867.85px;font-size:9.50px;color:#a8a8a8;font-family:'Liberation Mono', monospace;right:38.20px;letter-spacing:-0.146px;">weatherprovider.js:28</div>
<div class="r" style="left:1331.00px;top:875.69px;width:1193.00px;height:1.00px;background:#5e5e5e;"></div>
<div class="t" style="left:1331.00px;top:886.76px;font-family:'Liberation Mono',monospace;font-size:9.50px;letter-spacing:-0.146px;"><span style="color:#e3e3e3;">Weather provider: Open-Meteo started.</span></div>
<div class="t" id="t89" style="top:886.76px;font-size:9.50px;color:#a8a8a8;font-family:'Liberation Mono', monospace;right:38.20px;letter-spacing:-0.146px;">weatherprovider.js:39</div>
<div class="r" style="left:1331.00px;top:894.60px;width:1193.00px;height:1.00px;background:#5e5e5e;"></div>
<div class="t" style="left:1331.00px;top:905.67px;font-family:'Liberation Mono',monospace;font-size:9.50px;letter-spacing:-0.146px;"><span style="color:#e3e3e3;">Starting module: newsfeed</span></div>
<div class="t" id="t90" style="top:905.67px;font-size:9.50px;color:#a8a8a8;font-family:'Liberation Mono', monospace;right:38.20px;letter-spacing:-0.146px;">newsfeed.js:67</div>
<div class="r" style="left:1331.00px;top:913.51px;width:1193.00px;height:1.00px;background:#5e5e5e;"></div>
<div class="t" style="left:1331.00px;top:924.58px;font-family:'Liberation Mono',monospace;font-size:9.50px;letter-spacing:-0.146px;"><span style="color:#e3e3e3;">All modules started!</span></div>
<div class="t" id="t91" style="top:924.58px;font-size:9.50px;color:#a8a8a8;font-family:'Liberation Mono', monospace;right:38.20px;letter-spacing:-0.146px;">main.js:604</div>
<div class="r" style="left:1331.00px;top:932.42px;width:1193.00px;height:1.00px;background:#5e5e5e;"></div>
<div class="t" style="left:1331.00px;top:943.49px;font-family:'Liberation Mono',monospace;font-size:9.50px;letter-spacing:-0.146px;"><span style="color:#e3e3e3;">sorting events count=0</span></div>
<div class="t" id="t92" style="top:943.49px;font-size:9.50px;color:#a8a8a8;font-family:'Liberation Mono', monospace;right:38.20px;letter-spacing:-0.146px;">calendar.js:704</div>
<div class="r" style="left:1331.00px;top:951.33px;width:1193.00px;height:1.00px;background:#5e5e5e;"></div>
<div class="t" style="left:1331.00px;top:962.40px;font-family:'Liberation Mono',monospace;font-size:9.50px;letter-spacing:-0.146px;"><span style="color:#e3e3e3;">slicing events total maxcount=10</span></div>
<div class="t" id="t93" style="top:962.40px;font-size:9.50px;color:#a8a8a8;font-family:'Liberation Mono', monospace;right:38.20px;letter-spacing:-0.146px;">calendar.js:744</div>
<div class="r" style="left:1334.80px;top:970.24px;width:1189.20px;height:1.00px;background:#5e5e5e;"></div>
<svg style="left:1318px;top:973.64px" width="14" height="14" viewBox="0 0 14 14"><circle cx="7" cy="7" r="5.95" fill="#a8a8a8"/></svg>
<div class="t" id="t94" style="top:981.59px;font-size:9.20px;color:#282828;font-family:'Liberation Mono', monospace;left:1325.10px;transform:translateX(-50%) scaleX(1.0000);">2</div>
<div class="t" style="left:1334.80px;top:981.31px;font-family:'Liberation Mono',monospace;font-size:9.50px;letter-spacing:-0.146px;"><span style="color:#e3e3e3;">sorting events count=7</span></div>
<div class="t" id="t95" style="top:981.31px;font-size:9.50px;color:#a8a8a8;font-family:'Liberation Mono', monospace;right:38.20px;letter-spacing:-0.146px;">calendar.js:704</div>
<div class="r" style="left:1331.00px;top:989.15px;width:1193.00px;height:1.00px;background:#5e5e5e;"></div>
<div class="t" style="left:1331.00px;top:1000.22px;font-family:'Liberation Mono',monospace;font-size:9.50px;letter-spacing:-0.146px;"><span style="color:#e3e3e3;">slicing events total maxcount=10</span></div>
<div class="t" id="t96" style="top:1000.22px;font-size:9.50px;color:#a8a8a8;font-family:'Liberation Mono', monospace;right:38.20px;letter-spacing:-0.146px;">calendar.js:744</div>
<div class="r" style="left:1334.80px;top:1008.06px;width:1189.20px;height:1.00px;background:#5e5e5e;"></div>
<svg style="left:1318px;top:1011.46px" width="14" height="14" viewBox="0 0 14 14"><circle cx="7" cy="7" r="5.95" fill="#a8a8a8"/></svg>
<div class="t" id="t97" style="top:1019.41px;font-size:9.20px;color:#282828;font-family:'Liberation Mono', monospace;left:1325.10px;transform:translateX(-50%) scaleX(1.0000);">7</div>
<div class="t" style="left:1334.80px;top:1019.13px;font-family:'Liberation Mono',monospace;font-size:9.50px;letter-spacing:-0.146px;"><span style="color:#e3e3e3;">event fullday</span></div>
<div class="t" id="t98" style="top:1019.13px;font-size:9.50px;color:#a8a8a8;font-family:'Liberation Mono', monospace;right:38.20px;letter-spacing:-0.146px;">calendar.js:506</div>
<div class="r" style="left:1334.80px;top:1026.97px;width:1189.20px;height:1.00px;background:#5e5e5e;"></div>
<svg style="left:1318px;top:1030.37px" width="14" height="14" viewBox="0 0 14 14"><circle cx="7" cy="7" r="5.95" fill="#a8a8a8"/></svg>
<div class="t" id="t99" style="top:1038.32px;font-size:9.20px;color:#282828;font-family:'Liberation Mono', monospace;left:1325.10px;transform:translateX(-50%) scaleX(1.0000);">2</div>
<div class="t" style="left:1334.80px;top:1038.04px;font-family:'Liberation Mono',monospace;font-size:9.50px;letter-spacing:-0.146px;"><span style="color:#e3e3e3;">New weather information available.</span></div>
<div class="t" id="t100" style="top:1038.04px;font-size:9.50px;color:#a8a8a8;font-family:'Liberation Mono', monospace;right:38.20px;letter-spacing:-0.146px;">weather.js:165</div>
<div class="r" style="left:1331.00px;top:706.00px;width:1193.00px;height:1.00px;background:#5e5e5e;"></div>
<svg style="left:1314px;top:1048px" width="10" height="14" viewBox="0 0 10 14"><path d="M3.2 4.2 L6.3 7.3 L3.2 10.4" fill="none" stroke="#7cacf8" stroke-width="1.3"/></svg>
<div class="r" style="left:2549.00px;top:704.00px;width:11.00px;height:376.00px;background:#383838;"></div>
<svg style="left:2549px;top:704px" width="11" height="376" viewBox="0 0 11 376"><path d="M2.8 9.3 L5.5 6.4 L8.2 9.3 Z" fill="#e3e3e3"/><path d="M2.8 366.2 L5.5 369.1 L8.2 366.2 Z" fill="#9e9e9e"/></svg>
<div class="r" style="left:2551.00px;top:999.00px;width:8.00px;height:69.00px;background:#6a6a6a;"></div>
<div class="r" style="left:1326.30px;top:151.80px;width:683.70px;height:65.00px;background:transparent;box-sizing:border-box;border:2px solid #f0f;"></div>
<div class="r" style="left:2068.00px;top:67.00px;width:435.50px;height:50.00px;background:transparent;box-sizing:border-box;border:2px solid #f0f;"></div>
</body></html>
